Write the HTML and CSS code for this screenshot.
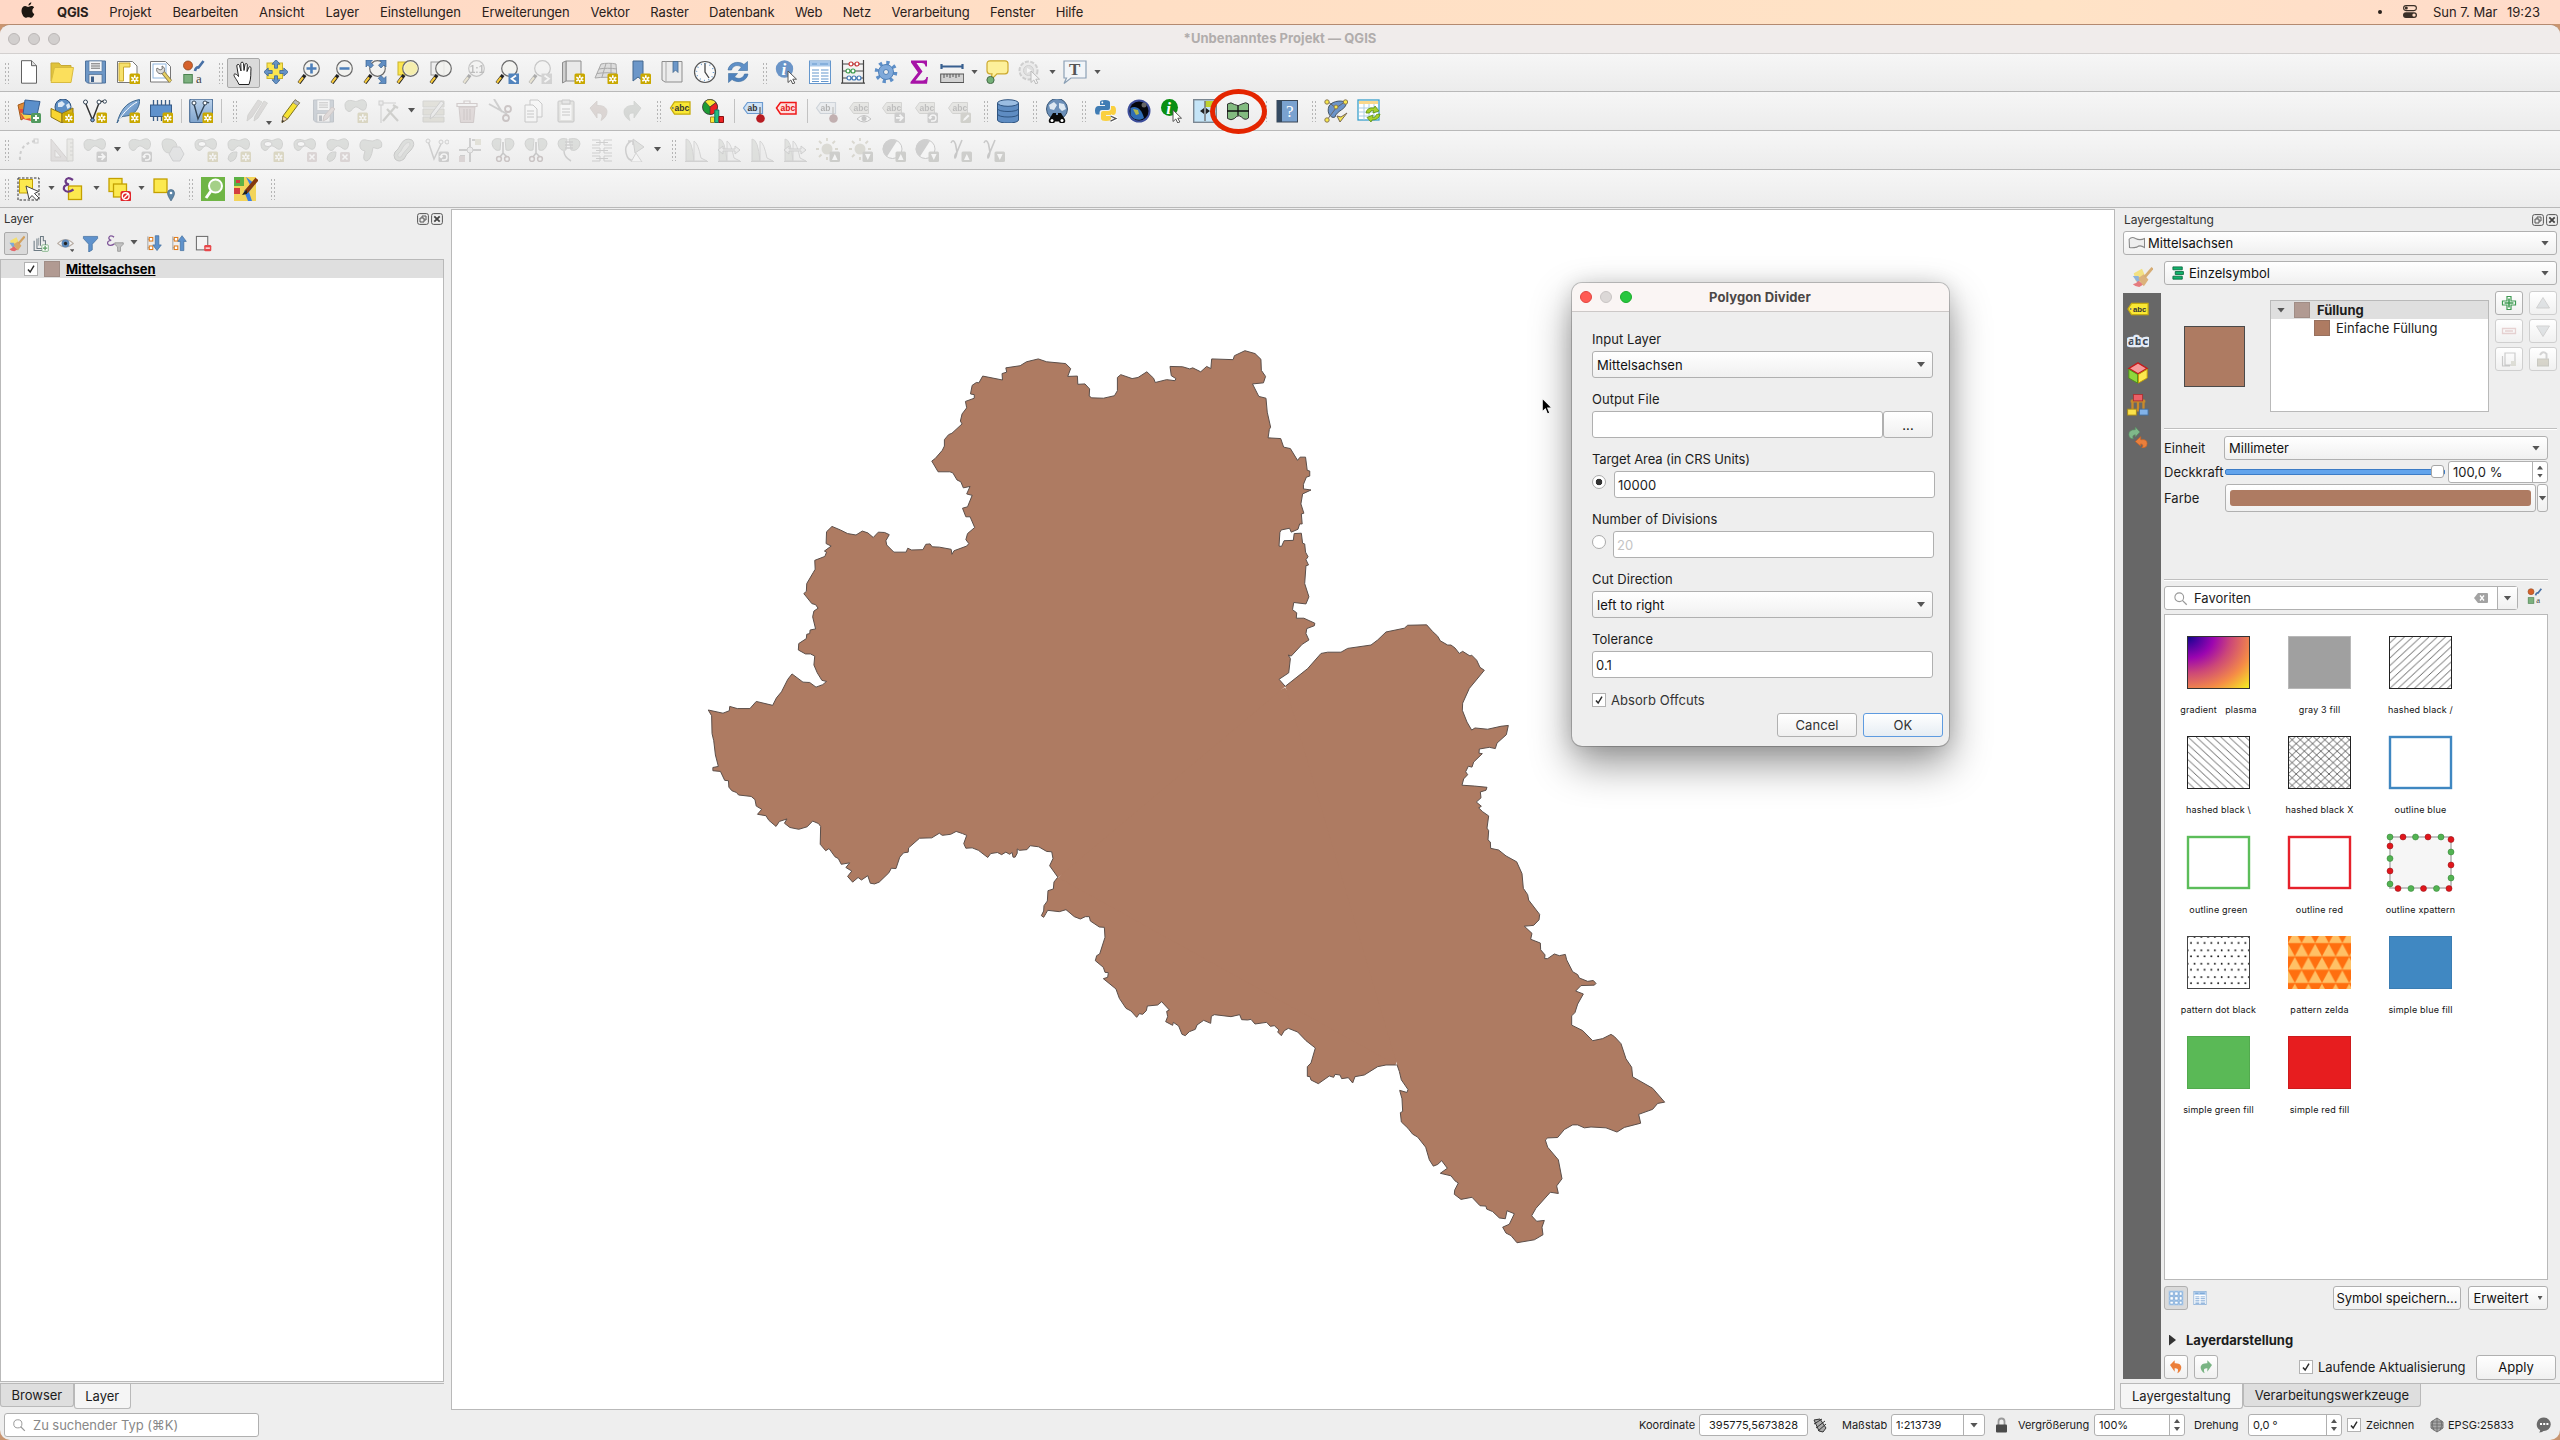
FILE: index.html
```html
<!DOCTYPE html>
<html lang="de">
<head>
<meta charset="utf-8">
<title>Unbenanntes Projekt — QGIS</title>
<link rel="stylesheet" href="styles.css">
</head>
<body>
<svg class="sprite" width="0" height="0" aria-hidden="true">
<defs>
<linearGradient id="gBlue" x1="0" y1="0" x2="1" y2="1"><stop offset="0" stop-color="#a9c8ea"/><stop offset="1" stop-color="#4a7db5"/></linearGradient>
<linearGradient id="gBox" x1="0" y1="0" x2="0" y2="1"><stop offset="0" stop-color="#bcd3ec"/><stop offset="1" stop-color="#7ea3cc"/></linearGradient>
<radialGradient id="gPlasma" cx="0" cy="0" r="1.4"><stop offset="0" stop-color="#0d0887"/><stop offset=".12" stop-color="#4a02a0"/><stop offset=".3" stop-color="#9c05b0"/><stop offset=".5" stop-color="#cc4778"/><stop offset=".75" stop-color="#f58c46"/><stop offset="1" stop-color="#f5f021"/></radialGradient>
<pattern id="pSlash" width="8.2" height="7.6" patternUnits="userSpaceOnUse"><path d="M-2 9.45L10.2 -1.85M-2 1.85L2 -1.85M6.2 9.45L10.2 5.75" stroke="#555" stroke-width=".9"/></pattern>
<pattern id="pBack" width="8.2" height="7.6" patternUnits="userSpaceOnUse"><path d="M-2 -1.85L10.2 9.45M-2 5.75L2 9.45M6.2 -1.85L10.2 1.85" stroke="#555" stroke-width=".9"/></pattern>
<pattern id="pDot" width="6.8" height="13.4" patternUnits="userSpaceOnUse"><circle cx="4" cy="7" r=".9"/><circle cx=".7" cy=".9" r=".9"/><circle cx="7.5" cy=".9" r=".9"/></pattern>
<pattern id="pZelda" width="13.6" height="26.6" patternUnits="userSpaceOnUse" y="-6"><path d="M0 13L6.8 .5L13.6 13ZM-6.8 26.3L0 13.8L6.8 26.3ZM6.8 26.3L13.6 13.8L20.4 26.3Z" fill="#ffc166"/></pattern>
</defs>
<symbol id="badge" viewBox="0 0 24 24"><rect x="13.5" y="13.5" width="10.5" height="11" rx="1.5" fill="#c9a800"/><path d="M18.8 15.2v7.6M15.3 17.2l7 3.8M22.3 17.2l-7 3.8" stroke="#fff" stroke-width="1.6"/><circle cx="18.8" cy="19" r="1.1" fill="#c9a800"/></symbol>
<symbol id="bx" viewBox="0 0 24 24"><rect x="14" y="14" width="10" height="10" rx="1.5" fill="#c99"/><path d="M16.5 16.5l5 5M21.5 16.5l-5 5" stroke="#fff" stroke-width="1.6"/></symbol>
<symbol id="barr" viewBox="0 0 24 24"><rect x="13.5" y="13.5" width="10.5" height="10.5" rx="1.5" fill="#888"/><path d="M15 18.8h6M18.5 15.7l3.2 3.1-3.2 3.1" fill="none" stroke="#fff" stroke-width="1.7"/></symbol>
<symbol id="brot" viewBox="0 0 24 24"><rect x="13.5" y="13.5" width="10.5" height="10.5" rx="1.5" fill="#888"/><path d="M17 22h2a3 3 0 1 0-3-3M14.8 18l1.3 1.6 1.6-1.4" fill="none" stroke="#fff" stroke-width="1.4"/></symbol>
<symbol id="bup" viewBox="0 0 24 24"><rect x="13.5" y="13.5" width="10.5" height="10.5" rx="1.5" fill="#898c78"/><path d="M16 22l2.8-6 2.8 6z" fill="#fff"/></symbol>
<symbol id="bdn" viewBox="0 0 24 24"><rect x="13.5" y="13.5" width="10.5" height="10.5" rx="1.5" fill="#898c78"/><path d="M16 16l2.8 6 2.8-6z" fill="#fff"/></symbol>
<symbol id="bpen" viewBox="0 0 24 24"><rect x="13.5" y="13.5" width="10.5" height="10.5" rx="1.5" fill="#999670"/><path d="M16 22l1-2.600 4-4 1.500 1.500-4 4z" fill="#fff"/></symbol>
<symbol id="lens" viewBox="0 0 24 24"><path d="M2 23L8 15" stroke="#222" stroke-width="3.6"/><path d="M2 22.600L6 17.300" stroke="#f8cb3c" stroke-width="2.200"/><circle cx="14.500" cy="8.500" r="7.800" fill="#f2f2ef" fill-opacity=".85" stroke="#6c6c6c" stroke-width="1.200"/></symbol>
<symbol id="cursor" viewBox="0 0 24 24"><path d="M13 11v11.500l2.800-2.500 2 4 2-1-2-3.800h3.700z" fill="#fff" stroke="#555" stroke-width="1"/></symbol>
<symbol id="blob" viewBox="0 0 24 24"><path d="M1 6C1 1.500 6 .5 10 2.200C14 3.500 16-.5 20 1.200C23.500 3 23 9 20.500 11C17 12.500 15 7.500 11.500 8C8 8.500 8 13 5 12.500C2 12 1 9 1 6Z" fill="#a9b8a3" stroke="#8a9088" stroke-width="1"/></symbol>

<symbol id="new" viewBox="0 0 24 24"><path d="M4.500 .7h10l5 5v17.500h-15z" fill="#fff" stroke="#606060"/><path d="M14.500 .7v5h5" fill="#ddd" stroke="#606060"/></symbol>
<symbol id="open" viewBox="0 0 24 24"><path d="M1 21V3h8l2 2.500h10V9" fill="#e0c33b" stroke="#c7a936"/><path d="M1 22.500L4.500 7.500H23.500L21 22.500z" fill="#fbdf5c" stroke="#d8bb40"/></symbol>
<symbol id="save" viewBox="0 0 24 24"><path d="M2.500 1h20v22h-18l-2-2z" fill="#6d97c6" stroke="#4f739d"/><rect x="6" y="1" width="13" height="10.500" fill="#f4f6f8" stroke="#5a7ba2" stroke-width=".7"/><path d="M8 3.800h9M8 6h9M8 8.200h9" stroke="#6c6c6c"/><rect x="6" y="14.500" width="13" height="8.500" fill="#eee" stroke="#506e91" stroke-width=".7"/><rect x="8" y="16.500" width="3" height="5.500" fill="#3e5f88"/></symbol>
<symbol id="layout" viewBox="0 0 24 24"><path d="M1.500 1.500h15l4.500 4.500v16.500h-19.500z" fill="#fff" stroke="#777"/><path d="M3 3h11v4H7.500v14H3z" fill="#f7e16b" stroke="#c9a82c"/><use href="#badge"/></symbol>
<symbol id="layouts" viewBox="0 0 24 24"><path d="M1.500 1.500h15l5 5v15.500h-20z" fill="#fff" stroke="#777"/><rect x="4" y="4" width="13" height="14" fill="none" stroke="#8fb6de"/><path d="M12 10l9.500 11.500" stroke="#8a7a42" stroke-width="4"/><path d="M13 11l8.500 10.500" stroke="#e6cf62" stroke-width="2.400"/><path d="M8 8a4 4 0 1 0 5-2l.3 3-2.300 1z" fill="#ddd" stroke="#777"/></symbol>
<symbol id="style" viewBox="0 0 24 24"><circle cx="6" cy="5.500" r="4.500" fill="#d5612b" stroke="#8d4720" stroke-width=".8"/><path d="M13 11c.5-3 2-4 3.500-3.500L21.500 1" fill="none" stroke="#4871a6" stroke-width="2.600"/><rect x="1.800" y="14.500" width="8.500" height="8.500" fill="#7cb07e" stroke="#4b8350"/><text x="14" y="23" font-family="Liberation Serif" font-size="13" fill="#444">a</text></symbol>
<symbol id="hand" viewBox="0 0 24 24"><path d="M8 23.500C6 18.500 2.500 15.500 3 13.500C4 12 6.500 14 7.500 15.500L5.800 5C5.600 3.200 8 2.800 8.500 4.500L10 10L9.800 2.500C9.800 .7 12.300 .7 12.500 2.500L13 9.500L14 3.500C14.300 2 16.500 2.300 16.300 4L16 10.500L17.700 6.500C18.300 5 20.200 5.700 20 7.300C19.500 12 20.500 17 18 23.500Z" fill="#fff" stroke="#222"/></symbol>
<symbol id="pan" viewBox="0 0 24 24"><rect x="3" y="3" width="15.500" height="15.500" fill="#fbe54f" stroke="#c9b32c"/><path d="M12 -.3l4 4.500h-2.500v4h-3v-4H8zM12 24.300l4-4.500h-2.500v-4h-3v4H8zM-.3 12l4.500-4v2.500h4v3h-4V16zM24.300 12l-4.500-4v2.500h-4v3h4V16z" fill="#6592c6" stroke="#3c6593" stroke-width=".8"/></symbol>
<symbol id="zin" viewBox="0 0 24 24"><use href="#lens"/><path d="M14.500 3.500v10M9.500 8.500h10" stroke="#4d7fba" stroke-width="2.600"/></symbol>
<symbol id="zout" viewBox="0 0 24 24"><use href="#lens"/><path d="M9.500 8.500h10" stroke="#4d7fba" stroke-width="2.600"/></symbol>
<symbol id="zfull" viewBox="0 0 24 24"><use href="#lens"/><path d="M3 0h6.500L7.500 2.200l3 3-2.800 2.800-3-3L3 7zM23 0v7l-2-2-3 3-2.500-2.800 3-3L16.500 0zM23 23.500h-7l2.200-2.200-3-3 2.800-2.800 3 3 2-2z" fill="#5f8dc2" stroke="#3c6593" stroke-width=".7"/></symbol>
<symbol id="zsel" viewBox="0 0 24 24"><rect x="2" y="2" width="13" height="13" fill="#fbe54f" stroke="#c9b32c"/><use href="#lens"/><circle cx="15" cy="8.500" r="6.500" fill="#f5eeae"/></symbol>
<symbol id="zlay" viewBox="0 0 24 24"><rect x="2" y="2" width="13" height="13" fill="#eee" stroke="#9a9a9a"/><use href="#lens"/></symbol>
<symbol id="z11" viewBox="0 0 24 24"><use href="#lens"/><text x="7.800" y="12.500" font-size="10" font-weight="700" font-family="Liberation Sans" fill="#555">1:1</text></symbol>
<symbol id="zlast" viewBox="0 0 24 24"><use href="#lens"/><rect x="13.500" y="13.500" width="10.500" height="10.500" fill="#5284bd"/><path d="M21 15.500l-4.500 3.300 4.500 3.300" fill="none" stroke="#fff" stroke-width="1.800"/></symbol>
<symbol id="znext" viewBox="0 0 24 24"><use href="#lens"/><rect x="13.500" y="13.500" width="10.500" height="10.500" fill="#999"/><path d="M16.500 15.500l4.500 3.300-4.500 3.300" fill="none" stroke="#fff" stroke-width="1.800"/></symbol>
<symbol id="nmap" viewBox="0 0 24 24"><path d="M5 1h15v20H5z" fill="#e9e9e9" stroke="#8d8d8d"/><path d="M1.500 2.500L5 1v20l-3.500 2z" fill="#cfcfcf" stroke="#8d8d8d"/><use href="#badge"/></symbol>
<symbol id="n3d" viewBox="0 0 24 24"><path d="M7 4c4-1 11-1 15 0l1 14c-7-1-15-1-22 0z" fill="#ddd" stroke="#a9a9a9"/><path d="M5 9c5-1 12-1 18 0M3 13.500c6-1 14-1 20 0M12 3.500L8 17M17 3.500l0 14" fill="none" stroke="#a9a9a9"/><use href="#badge"/></symbol>
<symbol id="nbook" viewBox="0 0 24 24"><path d="M6 1h10v20l-5-4-5 4z" fill="#6c97c9" stroke="#44698f"/><use href="#badge"/></symbol>
<symbol id="books" viewBox="0 0 24 24"><path d="M2 1.500h20v20.500H5l-3-2z" fill="#ececec" stroke="#8d8d8d"/><path d="M6 1.500v20" stroke="#aaa"/><path d="M13 1.500h5v11l-2.500-2.500-2.500 2.500z" fill="#6c97c9" stroke="#44698f" stroke-width=".8"/></symbol>
<symbol id="clock" viewBox="0 0 24 24"><circle cx="12" cy="12" r="10.500" fill="#fbfbfb" stroke="#555" stroke-width="1.200"/><path d="M12 3v9l4 6" fill="none" stroke="#444" stroke-width="1.300"/><circle cx="12" cy="12" r="8.500" fill="none" stroke="#6fa0d0" stroke-width="1.500" stroke-dasharray="1 3.450"/></symbol>
<symbol id="refresh" viewBox="0 0 24 24"><path d="M2 10C3 3 12 0 18 4.500L21.500 1.500V10.500H12.500L15.500 7C11 4 6.500 6 5.500 10Z" fill="#5f90c8" stroke="#42709f" stroke-width=".6"/><path d="M22 14C21 21 12 24 6 19.500L2.500 22.500V13.500H11.500L8.500 17C13 20 17.500 18 18.500 14Z" fill="#4f82bd" stroke="#42709f" stroke-width=".6"/></symbol>
<symbol id="ident" viewBox="0 0 24 24"><circle cx="9.500" cy="9" r="8.700" fill="#6b95c8"/><text x="6.500" y="15" font-family="Liberation Serif" font-style="italic" font-weight="700" font-size="17" fill="#fff">i</text><use href="#cursor"/></symbol>
<symbol id="table" viewBox="0 0 24 24"><rect x="1.500" y="1" width="21" height="22.500" fill="#fff" stroke="#6597cd"/><rect x="2" y="1.500" width="20" height="5" fill="#a8c8ea"/><path d="M4 10h7M4 13h7M4 16h7M4 19h7M4 21.500h7M13 10h7.500M13 13h7.500M13 16h7.500M13 19h7.500M13 21.500h7.500M12 4h8M4 4h5" stroke="#6597cd" stroke-width="1.200"/></symbol>
<symbol id="abacus" viewBox="0 0 24 24"><path d="M1.500 0v23M22.500 0v23M0 23.200h24M1.500 4h21M1.500 11h21M1.500 18h21" stroke="#444" stroke-width="1.200"/><g fill="#fff" stroke-width="1.200"><g stroke="#c33"><circle cx="10" cy="4" r="2"/><circle cx="16" cy="4" r="2"/></g><g stroke="#3a9a4a"><circle cx="7" cy="11" r="2"/><circle cx="12" cy="11" r="2"/></g><g stroke="#3f76b5"><circle cx="8" cy="18" r="2"/><circle cx="13" cy="18" r="2"/><circle cx="18" cy="18" r="2"/></g></g></symbol>
<symbol id="gear" viewBox="0 0 24 24"><circle cx="12" cy="12" r="9.300" fill="none" stroke="#5d8fc8" stroke-width="4" stroke-dasharray="3.200 4.100"/><circle cx="12" cy="12" r="7.500" fill="#7fa9da" stroke="#4f80b8"/><circle cx="12" cy="12" r="2.500" fill="#eee" stroke="#4f80b8"/></symbol>
<symbol id="sigma" viewBox="0 0 24 24"><path d="M4 0.500H20V6.500H18.500C18 4 17 3 14.500 3H9.500L15.500 11.500L8.500 20.500H15.500C18 20.500 19 19 19.500 17H21L20 23.800H3.500V22L11 12.500L4 2.500Z" fill="#a712a7"/></symbol>
<symbol id="ruler" viewBox="0 0 24 24"><path d="M1.500 6.500h21M1.500 4v5M22.500 4v5" stroke="#385f8f" stroke-width="2.200"/><rect x=".7" y="14" width="23" height="8.500" fill="#d2d2d2" stroke="#555"/><path d="M4 14v4M7 14v3M10 14v4M13 14v3M16 14v4M19 14v3" stroke="#555"/></symbol>
<symbol id="tip" viewBox="0 0 24 24"><path d="M5 .8h15q3 0 3 3v7q0 3-3 3h-8L6 20l1-6.200H5q-3 0-3-3v-7q0-3 3-3z" fill="#fdf09a" stroke="#cda92d" stroke-width="1.200"/><circle cx="5.500" cy="20" r="3.600" fill="#74b077" stroke="#466b48"/></symbol>
<symbol id="play" viewBox="0 0 24 24"><circle cx="10.500" cy="10.500" r="9" fill="#ddd" stroke="#888" stroke-width="2" stroke-dasharray="4 1.500"/><circle cx="10.500" cy="10.500" r="5" fill="#bbb" stroke="#888"/><path d="M9 8l4.500 2.500L9 13z" fill="#fff"/><use href="#cursor"/></symbol>
<symbol id="tbox" viewBox="0 0 24 24"><path d="M1 1h22v17H8l-7 5.500 2.500-5.500H1z" fill="#f2f5f8" stroke="#8ba0b5" stroke-width="1.200"/><text x="6" y="15" font-family="Liberation Serif" font-size="17" font-weight="700" fill="#555">T</text></symbol>

<symbol id="dsm" viewBox="0 0 24 24"><path d="M1 6l8-3v15l-5 3z" fill="#e08a33" stroke="#a3591b"/><path d="M2 10l4 10 8 2-2-12z" fill="#e34f3a"/><path d="M4 14l4 6 6-1v-6z" fill="#f5d34b"/><path d="M8 1L23 2.500 20 16 6 15z" fill="#5b8fcb" stroke="#375f92"/><rect x="14" y="14" width="10" height="10" rx="1.500" fill="#529a5f"/><path d="M19 16v6M16 19h6" stroke="#fff" stroke-width="1.800"/></symbol>
<symbol id="gpkg" viewBox="0 0 24 24"><circle cx="13" cy="8" r="8" fill="#5d8fc5" stroke="#2f5480"/><path d="M8 4l4-2 3 3-3 3-4 0zM16 6l3-2 1.500 4-3 2z" fill="#dce9f5"/><path d="M1 9.500l11 5v9.500L1 18z" fill="#f9d530" stroke="#8c7415"/><path d="M12 14.500L23 9v9l-11 6z" fill="#d9b31b" stroke="#8c7415"/><use href="#badge"/></symbol>
<symbol id="shp" viewBox="0 0 24 24"><path d="M2.500 4l7 17L16 4C17 2 20 2 22 3" fill="none" stroke="#333" stroke-width="1.500"/><circle cx="2.500" cy="3" r="2" fill="#fff" stroke="#345"/><circle cx="16" cy="3" r="2" fill="#fff" stroke="#345"/><circle cx="21.800" cy="2.500" r="1.700" fill="#fff" stroke="#345"/><circle cx="9.500" cy="21" r="1.800" fill="#7aa5d5" stroke="#345"/><use href="#badge"/></symbol>
<symbol id="feather" viewBox="0 0 24 24"><path d="M1 24C4 13 9 3 23.500 .5C24 6 21 14 13 16.500C9 17.500 6 17 4.500 18.500Z" fill="url(#gBlue)" stroke="#40698f"/><path d="M3 21C8 13 14 7 21 3" fill="none" stroke="#fff"/><use href="#badge"/></symbol>
<symbol id="chip" viewBox="0 0 24 24"><path d="M4.500 1v21M8.500 1v21M12.500 1v21M16.500 1v21M20.500 1v21" stroke="#3c5f88" stroke-width="1.300"/><rect x="1.500" y="6" width="21" height="11.500" fill="#5f92cc" stroke="#365b88"/><use href="#badge"/></symbol>
<symbol id="virt" viewBox="0 0 24 24"><rect x=".7" y=".2" width="23" height="23.500" rx="1.500" fill="url(#gBox)" stroke="#4c6f98" stroke-width="1.200"/><path d="M5 5l4 15L16 5C17 3 19 3 20 4" fill="none" stroke="#345" stroke-width="1.400"/><circle cx="5" cy="4" r="2" fill="#fff" stroke="#345"/><circle cx="16" cy="4" r="2" fill="#fff" stroke="#345"/><use href="#badge"/></symbol>
<symbol id="pens" viewBox="0 0 24 24"><path d="M2 22l1-6L13 1l4 2L7 18zM9 22l1-5L19 2l3.500 2L13 19z" fill="#b7a9a5" stroke="#998"/></symbol>
<symbol id="pencil" viewBox="0 0 24 24"><path d="M4 23.500L5 17 17 .8l4.500 3L9.500 20z" fill="#f6e233" stroke="#7a7020"/><path d="M17 .8l4.500 3-2 2.800-4.500-3z" fill="#b9b9b9" stroke="#777" stroke-width=".6"/><path d="M4 23.500L5 17l4.500 3z" fill="#f3d7b0" stroke="#654" stroke-width=".7"/><path d="M4 23.500l.5-2.500 1.700 1z" fill="#222"/></symbol>
<symbol id="savee" viewBox="0 0 24 24"><use href="#save"/><path d="M12 22l1-5 8-9 3 2-8 10z" fill="#d9a9a0" stroke="#a77"/></symbol>
<symbol id="addf" viewBox="0 0 24 24"><use href="#blob"/><use href="#badge"/></symbol>
<symbol id="vtx" viewBox="0 0 24 24"><path d="M4 4L4 24M4 4L19 4" stroke="#888"/><rect x="2" y="2" width="4" height="4" fill="#ddd" stroke="#888"/><path d="M6 22L18 8M10 10l11 12M16 6l5 3" stroke="#8c8f7a" stroke-width="2.200"/></symbol>
<symbol id="multi" viewBox="0 0 24 24"><path d="M1 2h21v6H1zM1 10h21v6H1zM1 18h21v5H1z" fill="#c5bf8c" stroke="#998"/><path d="M8 20l1-5 10-13 3 2-10 13z" fill="#ddd" stroke="#888"/></symbol>
<symbol id="trash" viewBox="0 0 24 24"><path d="M4 8h16l-1.500 15.500h-13z" fill="#dba4a4" stroke="#a77"/><path d="M2 4.500h20v3H2zM9 4V2h6v2M9 10v11M12 10v11M15 10v11" fill="none" stroke="#a77" stroke-width="1.200"/></symbol>
<symbol id="cut" viewBox="0 0 24 24"><path d="M1 5l18 10M6 0l8 13" stroke="#888" stroke-width="2"/><circle cx="20" cy="10" r="3" fill="none" stroke="#966" stroke-width="1.800"/><circle cx="18" cy="19" r="3" fill="none" stroke="#966" stroke-width="1.800"/></symbol>
<symbol id="copy" viewBox="0 0 24 24"><path d="M9 1h8l4 4v13H9z" fill="#fff" stroke="#777"/><path d="M4 6h8l4 4v13H4z" fill="#fff" stroke="#777"/><path d="M6 12h7M6 15h7M6 18h7" stroke="#777"/></symbol>
<symbol id="paste" viewBox="0 0 24 24"><rect x="4" y="2" width="16" height="21" rx="1" fill="#c9c7b8" stroke="#777"/><path d="M6.500 6h11v15h-11z" fill="#fff"/><path d="M8 1h8v4H8z" fill="#ccc" stroke="#777"/><path d="M8 10h8M8 13h8M8 16h8" stroke="#777"/></symbol>
<symbol id="undo" viewBox="0 0 24 24"><path d="M3 9l7-7v4.500c8-.5 12 4 9 10-1 2-3 4-5 5 1-3 3-8-4-7.500V19z" fill="#c98" stroke="#a87" stroke-width=".8"/></symbol>
<symbol id="redo" viewBox="0 0 24 24"><path d="M21 9l-7-7v4.500c-8-.5-12 4-9 10 1 2 3 4 5 5-1-3-3-8 4-7.500V19z" fill="#9a9" stroke="#898" stroke-width=".8"/></symbol>
<symbol id="lab" viewBox="0 0 24 24"><path d="M1.500 9L5.500 2.800h15.500v12.400H5.500z" fill="#fae834" stroke="#c6ac10" stroke-width="1.300"/><circle cx="3.800" cy="9" r="1" fill="#777"/><text x="5.500" y="12" font-family="Liberation Sans" font-weight="700" font-size="8.500" fill="#333">abc</text></symbol>
<symbol id="labtab" viewBox="0 0 24 24"><path d="M1 12L5 5.800h18v12.400H5z" fill="#fae834" stroke="#c6ac10" stroke-width="1.300"/><circle cx="4" cy="12" r="1" fill="#777"/><text x="6.500" y="15" font-family="Liberation Sans" font-weight="700" font-size="8.500" fill="#333">abc</text></symbol>
<symbol id="diag" viewBox="0 0 24 24"><circle cx="8" cy="8" r="7.500" fill="#1d9b35" stroke="#333" stroke-width=".8"/><path d="M8 8L3 2.500A7.500 7.500 0 0 1 14 3.500Z" fill="#fae834" stroke="#333" stroke-width=".6"/><path d="M8 8L14 3.500A7.500 7.500 0 0 1 8 15.500Z" fill="#e22" stroke="#333" stroke-width=".6"/><path d="M8.500 18h4v5.500h-4z" fill="#fae834" stroke="#a82"/><path d="M12.800 11h4v12.500h-4z" fill="#25c07f" stroke="#176"/><path d="M17 17.500h4.500v6H17z" fill="#e22" stroke="#811"/></symbol>
<symbol id="pin" viewBox="0 0 24 24"><path d="M1.500 9L5.500 3.500h15v11h-15z" fill="#cfe2f6" stroke="#6c9bd0" stroke-width="1.200"/><text x="5.500" y="12" font-family="Liberation Sans" font-weight="700" font-size="8.500" fill="#333">ab</text><path d="M18 8v10" stroke="#777" stroke-width="1.500"/><circle cx="18.500" cy="19.500" r="4.300" fill="#b71c22"/></symbol>
<symbol id="labr" viewBox="0 0 24 24"><path d="M1.500 9L5.500 3.500h15.500v11.500H5.500z" fill="#fdd" stroke="#f01818" stroke-width="1.500"/><text x="5.500" y="12" font-family="Liberation Sans" font-weight="700" font-size="8.500" fill="#e01010">abc</text></symbol>
<symbol id="labg" viewBox="0 0 24 24"><path d="M1.500 9L5.500 3.500h15v11h-15z" fill="#cfcdb8" stroke="#99978a"/><text x="5.500" y="12" font-family="Liberation Sans" font-weight="700" font-size="8.500" fill="#555">abc</text></symbol>
<symbol id="labeye" viewBox="0 0 24 24"><use href="#labg"/><path d="M9 20q7-7 14 0q-7 6-14 0z" fill="#fff" stroke="#666"/><circle cx="16" cy="19.500" r="2.500" fill="#777"/></symbol>
<symbol id="labmv" viewBox="0 0 24 24"><use href="#labg"/><use href="#barr"/></symbol>
<symbol id="labrt" viewBox="0 0 24 24"><use href="#labg"/><use href="#brot"/></symbol>
<symbol id="labed" viewBox="0 0 24 24"><use href="#labg"/><use href="#bpen"/></symbol>
<symbol id="db" viewBox="0 0 24 24"><path d="M1.500 4v17c0 4 21 4 21 0V4" fill="#5e8cc2" stroke="#2f5480"/><ellipse cx="12" cy="4" rx="10.500" ry="3.300" fill="#9bbde2" stroke="#2f5480"/><path d="M1.500 9.500c0 4 21 4 21 0M1.500 15c0 4 21 4 21 0" fill="none" stroke="#2f5480"/></symbol>
<symbol id="binoc" viewBox="0 0 24 24"><circle cx="12" cy="10" r="10.500" fill="#6b8fb8" stroke="#3a5878"/><path d="M4 6l5-3 3 3-3 5-4-1zM14 4l5 1 2 5-4 2-3-3z" fill="#dde8f2"/><path d="M8 14h3v2h2v-2h3l4 6.500a3 3 0 1 1-6 2h-4a3 3 0 1 1-6-2z" fill="#0a0a0a"/><circle cx="7" cy="21.500" r="1.500" fill="#fff"/><circle cx="17" cy="21.500" r="1.500" fill="#fff"/></symbol>
<symbol id="py" viewBox="0 0 24 24"><path d="M6 6V3Q6 1 11 1t5 2.500V9q0 2-2 2H8q-2.500 0-2.500 3v1.500H3Q1 15.500 1 11.500T4 7h7V6z" fill="#3f7cb4"/><path d="M17 7h2.500Q22 7 22 11.500T19 16h-7v1h5v2.500Q17 22 12 22t-5-2.500V14q0-2 2-2h5q3 0 3-3z" fill="#fad03f"/><circle cx="8.300" cy="3.500" r=".9" fill="#fff"/><path d="M16.500 16.500l6 3-6 3" fill="none" stroke="#fff" stroke-width="3"/><path d="M16.500 17l5.500 2.600-5.500 2.600" fill="none" stroke="#555" stroke-width="1.300"/></symbol>
<symbol id="earth" viewBox="0 0 24 24"><circle cx="12" cy="12" r="11.500" fill="#3c4d9a"/><circle cx="12" cy="12" r="9.500" fill="#05070d"/><path d="M3.500 9c5-3 11 0 13.500 10-4 3-10 2.500-13.500-3z" fill="#2f6db5"/><path d="M6 10l5 1 1 4-3 1z" fill="#b0b94a"/><circle cx="17" cy="6" r="2.500" fill="#666"/></symbol>
<symbol id="gi" viewBox="0 0 24 24"><circle cx="9.500" cy="8.500" r="8.500" fill="#0a8f12"/><text x="6.300" y="14.500" font-family="Liberation Serif" font-style="italic" font-weight="700" font-size="17" fill="#fff">i</text><use href="#cursor"/></symbol>
<symbol id="swipe" viewBox="0 0 24 24"><rect x=".7" y=".7" width="22.600" height="22.600" fill="#c4e4f7" stroke="#7b8792" stroke-width="1.400"/><path d="M12 2h10v6H12z" fill="#bed22e"/><path d="M12 2v20" stroke="#777" stroke-width="1.500"/><path d="M7 12l4-3v6zM17 12l-4-3v6z" fill="#222"/></symbol>
<symbol id="divider" viewBox="0 0 24 24"><path d="M1.500 5Q5 2.500 8.500 5.500Q12 8 16 5Q20 2.500 22.500 5V19Q19 22 15.500 18Q12 15 8.500 19.500Q5 22 1.500 19.500Z" fill="#83bb80" stroke="#333"/><path d="M1 12h22M12 6.500v10" stroke="#111" stroke-width="1.300"/></symbol>
<symbol id="help" viewBox="0 0 24 24"><rect x="2" y="1.500" width="20.500" height="21.500" fill="#7aa2d0" stroke="#3b4756"/><rect x="2" y="1.500" width="5" height="21.500" fill="#344a62"/><text x="11" y="18" font-family="Liberation Serif" font-size="17" fill="#fff">?</text></symbol>
<symbol id="topo" viewBox="0 0 24 24"><path d="M5 7C9 1 20 1 22 4C23 10 12 12 11 18C8 20 2 15 5 7Z" fill="#6c94c9" stroke="#456"/><path d="M3 2l9 7L22 2M12 9L3 21" stroke="#666" fill="none"/><g fill="#f8e84a" stroke="#875"><circle cx="3" cy="3" r="2.200"/><circle cx="21.500" cy="3" r="2.200"/><circle cx="12" cy="8" r="2"/><circle cx="3" cy="21" r="2.200"/></g><path d="M13 17l3 6 7-9-6 4z" fill="#f8e84a" stroke="#765"/></symbol>
<symbol id="tabref" viewBox="0 0 24 24"><rect x="1" y="1" width="21" height="20" fill="#fff" stroke="#3ba0cd" stroke-width="1.300"/><path d="M2 2h19v3H2z" fill="#f9d88c"/><path d="M2 9h19M2 13h19M2 17h19M7 5v16M12 5v16M17 5v16" stroke="#aecfe4"/><path d="M9 14q1-6 8-5l1-2 4 5-6 2 .5-2.500q-3-.5-4 2.500zM23 15q-1 6-8 6l-1 2-4-4.500 6-2.500-.5 2.500q3 .5 4-3z" fill="#a7d129" stroke="#5a8f10" stroke-width=".8"/></symbol>

<symbol id="curve" viewBox="0 0 24 24"><path d="M3 22Q2 6 18 3" fill="none" stroke="#888" stroke-width="2" stroke-dasharray="3 3"/><rect x="17" y="1" width="4" height="4" fill="none" stroke="#888"/></symbol>
<symbol id="tri" viewBox="0 0 24 24"><path d="M1 1v22h18zM5 12v7h6z" fill="#c8b8b4" fill-rule="evenodd" stroke="#a9908c"/><path d="M17 1h6v22h-6z" fill="#d8d6bc" stroke="#998"/><path d="M20 5h3M20 9h3M20 13h3M20 17h3" stroke="#998"/></symbol>
<symbol id="mv" viewBox="0 0 24 24"><use href="#blob"/><use href="#barr"/></symbol>
<symbol id="rt" viewBox="0 0 24 24"><use href="#blob"/><use href="#brot"/></symbol>
<symbol id="simp" viewBox="0 0 24 24"><path d="M1 6q0-6 7-5q7 1 8 7q-2 6-8 7q-6 0-7-9z" fill="#a9b8a3" stroke="#8a9088"/><path d="M12 9h7l4 7-4 7h-7l-4-7z" fill="#c2cad0" stroke="#8a9098"/></symbol>
<symbol id="ring" viewBox="0 0 24 24"><use href="#blob"/><ellipse cx="8" cy="6" rx="4" ry="2.500" fill="#fff" stroke="#888"/><use href="#badge"/></symbol>
<symbol id="part" viewBox="0 0 24 24"><use href="#blob"/><path d="M1 21q1-8 9-7q0 9-7 9.500z" fill="#a9b8a3" stroke="#8a9088"/><use href="#badge"/></symbol>
<symbol id="dring" viewBox="0 0 24 24"><use href="#blob"/><ellipse cx="8" cy="6" rx="4" ry="2.500" fill="#fff" stroke="#888"/><use href="#bx"/></symbol>
<symbol id="dpart" viewBox="0 0 24 24"><use href="#blob"/><path d="M1 21q1-8 9-7q0 9-7 9.500z" fill="#a9b8a3" stroke="#8a9088"/><use href="#bx"/></symbol>
<symbol id="reshape" viewBox="0 0 24 24"><path d="M1 6Q2 0 9 2.500Q14 4 18 1.500Q24 2 22.500 9Q19 12 14 9.500Q12 23 7 23Q3 22 6 13Q0 12 1 6Z" fill="#a9b8a3" stroke="#8a9088"/></symbol>
<symbol id="offset" viewBox="0 0 24 24"><path d="M3 14Q6 12 9 6Q13 -1 20 2Q24 6 19 12Q14 16 12 21Q7 25 3 21Q1 17 3 14Z" fill="#a9b8a3" stroke="#777"/><path d="M6 16Q9 14 11 9Q15 3 18 5Q19 7 15 11Q11 15 9 19Q5 20 6 16Z" fill="#c7cfc3" stroke="#999"/></symbol>
<symbol id="vrot" viewBox="0 0 24 24"><path d="M3 3l6 18L16 6" fill="none" stroke="#888" stroke-width="1.500"/><circle cx="3" cy="3" r="2" fill="#eee" stroke="#888"/><circle cx="16" cy="4" r="2" fill="#eee" stroke="#888"/><circle cx="22" cy="4" r="2" fill="#eee" stroke="#888"/><use href="#brot"/></symbol>
<symbol id="trim" viewBox="0 0 24 24"><path d="M12 0v24M1 12h22M14 2h4M2 18h5" stroke="#888" stroke-width="2"/><circle cx="12" cy="12" r="3" fill="#ddd" stroke="#888"/><rect x="17" y="1" width="6" height="6" fill="#c7bf77"/><rect x="1" y="18" width="6" height="6" fill="#c99"/></symbol>
<symbol id="split" viewBox="0 0 24 24"><path d="M10 1q-9-2-9 5q2 8 8 6zM14 1q9-2 9 5q-2 8-8 6z" fill="#a9b8a3" stroke="#8a9088"/><path d="M12 4v11M12 15l-3 4M12 15l4 4" stroke="#777" stroke-width="1.500"/><circle cx="8" cy="21" r="2.400" fill="none" stroke="#966" stroke-width="1.500"/><circle cx="16" cy="21" r="2.400" fill="none" stroke="#966" stroke-width="1.500"/></symbol>
<symbol id="merge" viewBox="0 0 24 24"><path d="M10 1q-9-2-9 5q2 8 8 6zM12 1q11-2 11 5q-2 8-9 6z" fill="#a9b8a3" stroke="#8a9088"/><path d="M8 4h8M8 7h8M8 10h8M7 13q0 6 7 10" stroke="#888" stroke-width="1.500" fill="none"/></symbol>
<symbol id="grid" viewBox="0 0 24 24"><path d="M2 2h8v5H2M22 2h-8v5h8M2 10h8v5H2M22 10h-8v5h8M2 18h8v5H2M22 18h-8v5h8M6 4.500h12M6 12.500h12M6 20.500h12" fill="none" stroke="#888"/></symbol>
<symbol id="rsym" viewBox="0 0 24 24"><path d="M8 3Q0 8 4 18M11 23Q5 22 4 18M5 3h5v4" fill="none" stroke="#888" stroke-width="1.500"/><path d="M10 1l11 8-9 6z" fill="#b9c0b5" stroke="#888"/><path d="M13 15l6 9H8z" fill="#fff" stroke="#999"/></symbol>
<symbol id="hist" viewBox="0 0 24 24"><path d="M1 23.500h23" stroke="#999"/><path d="M2 23V1q6 0 8 22z" fill="#b8c2b0" stroke="#999"/><path d="M10 23V3q4 2 7 17l6 3z" fill="#e6e6e6" stroke="#999"/></symbol>
<symbol id="histx" viewBox="0 0 24 24"><use href="#hist"/><path d="M1 12l5-4v3h12V8l5 4-5 4v-3H6v3z" fill="#ddd" stroke="#888"/></symbol>
<symbol id="sun" viewBox="0 0 24 24"><circle cx="11" cy="11" r="5.500" fill="#b4ad7b"/><path d="M11 0v3M11 19v3M0 11h3M19 11h3M3 3l2.500 2.500M19 3l-2.500 2.500M3 19l2.500-2.500" stroke="#b4a35b" stroke-width="1.800"/></symbol>
<symbol id="sunu" viewBox="0 0 24 24"><use href="#sun"/><use href="#bup"/></symbol>
<symbol id="sund" viewBox="0 0 24 24"><use href="#sun"/><use href="#bdn"/></symbol>
<symbol id="con" viewBox="0 0 24 24"><circle cx="10.500" cy="11" r="9.500" fill="#fff" stroke="#777"/><path d="M15 3A9 9 0 0 0 5 18.500z" fill="#888"/></symbol>
<symbol id="conu" viewBox="0 0 24 24"><use href="#con"/><use href="#bup"/></symbol>
<symbol id="cond" viewBox="0 0 24 24"><use href="#con"/><use href="#bdn"/></symbol>
<symbol id="gam" viewBox="0 0 24 24"><path d="M3 5Q5 0 7.500 6L9 14Q8 20 7 20Q6 18 9 14L14 2" fill="none" stroke="#777" stroke-width="1.600"/></symbol>
<symbol id="gamu" viewBox="0 0 24 24"><use href="#gam"/><use href="#bup"/></symbol>
<symbol id="gamd" viewBox="0 0 24 24"><use href="#gam"/><use href="#bdn"/></symbol>

<symbol id="sel" viewBox="0 0 24 24"><rect x="1" y="1" width="21" height="22" fill="none" stroke="#333" stroke-dasharray="2.500 1.500"/><rect x="2.500" y="2.500" width="13" height="13.500" fill="#fce94f" stroke="#c4a000"/><path d="M9 9l3 13 3-3.500 4.500 4.500 2.500-2-4.500-4.500 4-2z" fill="#fff" stroke="#444"/></symbol>
<symbol id="eps" viewBox="0 0 24 24"><rect x="6.500" y="9" width="13" height="13.500" fill="#fce94f" stroke="#c4a000" stroke-width="1.300"/><path d="M11 3Q5-1 3.500 4Q3.500 7 7 7.500Q1 8 2 12.500Q5 17 11.500 12.500" fill="none" stroke="#6b3a86" stroke-width="2.200"/></symbol>
<symbol id="desel" viewBox="0 0 24 24"><rect x="2" y="1.500" width="13" height="13" fill="#fce94f" stroke="#c4a000" stroke-width="1.300"/><rect x="6.500" y="7" width="13" height="13" fill="#fce94f" stroke="#c4a000" stroke-width="1.300"/><rect x="13.500" y="14" width="10.500" height="10.500" rx="2" fill="#e0262b"/><circle cx="18.700" cy="19.200" r="3.400" fill="none" stroke="#fff" stroke-width="1.400"/><path d="M16.500 21.500l4.500-4.500" stroke="#fff" stroke-width="1.400"/></symbol>
<symbol id="sloc" viewBox="0 0 24 24"><rect x="2" y="2" width="13" height="13.500" fill="#fce94f" stroke="#c4a000" stroke-width="1.300"/><path d="M19 24q-4-6-3.500-8.500q.5-3 3.500-3t3.500 3q.5 2.500-3.500 8.500z" fill="#5f87a8" stroke="#41627d" stroke-width=".6"/><circle cx="19" cy="16" r="1.300" fill="#fff"/></symbol>
<symbol id="osm" viewBox="0 0 24 24"><rect width="24" height="24" y="0" fill="#6fb545"/><circle cx="14.500" cy="9" r="6.500" fill="#a5d088" stroke="#fff" stroke-width="2"/><path d="M10 14l-5 7" stroke="#fff" stroke-width="3"/></symbol>
<symbol id="qosm" viewBox="0 0 24 24"><rect width="22" height="24" fill="#f3d45a"/><path d="M0 0h10v9H0z" fill="#5cb245"/><path d="M12 0l4 8-6 6 4 10h4l-3-9 6-8z" fill="#3c7fe0"/><path d="M0 11h6v6H0zM2 3h4v3H2z" fill="#d33f3f"/><path d="M23 2L12 15" stroke="#84380e" stroke-width="4"/><path d="M13 13q-3 1-5 5l5-1z" fill="#222"/></symbol>

<symbol id="brush" viewBox="0 0 24 24"><path d="M3 8l9-5 4 9-10 9q2-4-1-5z" fill="#f4df70"/><path d="M2 11l6 0 3 4-4 3z" fill="#7ea9d8"/><path d="M2 20q4-1 6-4l6 4-5 3q-4 0-7-3z" fill="#e4676b"/><path d="M8 13l6-4 5 6-5 7q-4-4-6-9z" fill="#d9a868"/><path d="M15 12L23.500 2" stroke="#d2a15f" stroke-width="3"/></symbol>
<symbol id="addg" viewBox="0 0 24 24"><path d="M3 8v14h11M7 5v14h12V8h-3V2h-4v13" fill="none" stroke="#6d7b84" stroke-width="1.500"/><path d="M9.500 15V4" stroke="#6d7b84"/><rect x="14" y="14" width="9" height="9" rx="1" fill="#fff" stroke="#5a9c62"/><path d="M18.500 15.500v6M15.500 18.500h6" stroke="#5a9c62" stroke-width="1.800"/></symbol>
<symbol id="eye" viewBox="0 0 24 24"><path d="M1 12Q12 1 23 12Q12 22 1 12Z" fill="#f4f4f4" stroke="#b9aea5" stroke-width="1.500"/><circle cx="12" cy="12" r="5.500" fill="#5b87b8"/><circle cx="12" cy="12" r="2.300" fill="#222"/><path d="M18 20h7l-3.500 4z" fill="#555"/></symbol>
<symbol id="filter" viewBox="0 0 24 24"><path d="M2 2h20v3l-7.500 8v8l-5 3V13L2 5z" fill="#5f92cc" stroke="#3f6b9c"/></symbol>
<symbol id="epsf" viewBox="0 0 24 24"><path d="M10 3Q4-1 2.500 4Q2.500 7 6 7.500Q0 8 1 12.500Q4 17 10.500 12.500" fill="none" stroke="#80589a" stroke-width="1.800"/><path d="M11 11h12v2l-4 4v6h-4v-6l-4-4z" fill="#c2c2c2" stroke="#888"/></symbol>
<symbol id="expd" viewBox="0 0 24 24"><path d="M4 2v19M4 6h6M4 18h6" stroke="#888"/><rect x="6" y="3.500" width="5" height="5" fill="#fff" stroke="#e07b1a" stroke-width="1.500"/><rect x="6" y="15.500" width="5" height="5" fill="#fff" stroke="#e07b1a" stroke-width="1.500"/><path d="M14.500 1h5v13h3.500L17 22l-6-8h3.500z" fill="#5f92cc" stroke="#3f6b9c"/></symbol>
<symbol id="coll" viewBox="0 0 24 24"><path d="M4 2v19M4 6h6M4 18h6" stroke="#888"/><rect x="6" y="3.500" width="5" height="5" fill="#fff" stroke="#e07b1a" stroke-width="1.500"/><rect x="6" y="15.500" width="5" height="5" fill="#fff" stroke="#e07b1a" stroke-width="1.500"/><path d="M14.500 22h5V9h3.500L17 1l-6 8h3.500z" fill="#5f92cc" stroke="#3f6b9c"/></symbol>
<symbol id="rem" viewBox="0 0 24 24"><rect x="2" y="2" width="16" height="19" fill="#f4f4f4" stroke="#6e6e6e" stroke-width="1.500"/><rect x="13" y="14" width="10" height="9" rx="2" fill="#e8484b"/><path d="M15 18.500h6" stroke="#fff" stroke-width="1.800"/></symbol>
<symbol id="abc3" viewBox="0 0 24 24"><text x="1" y="16.500" font-family="Noto Sans" font-weight="700" font-size="12.500" fill="#3c4654" stroke="#e4ebf6" stroke-width="5" stroke-linejoin="round" paint-order="stroke" textLength="22">abc</text></symbol>
<symbol id="cube" viewBox="0 0 24 24"><path d="M12 1l10 6-10 6L2 7z" fill="#f59a9a" stroke="#c41c1c" stroke-width="1.500"/><path d="M2 8l9.500 5.500V23L2 17.500z" fill="#8fd83c" stroke="#4d9417"/><path d="M22 8l-9.500 5.500V23l9.500-5.500z" fill="#fce94f" stroke="#c4a000"/></symbol>
<symbol id="style3" viewBox="0 0 24 24"><path d="M12 6v13M6 6v12M18 6v12M4 8h16" stroke="#c98a2a" stroke-width="2.500"/><rect x="7" y=".5" width="10" height="7" fill="#ec5f66" stroke="#a33"/><rect x=".7" y="16.500" width="9.500" height="6.500" fill="#fbe24a" stroke="#a88a17"/><rect x="13.500" y="16.500" width="9.500" height="6.500" fill="#82b2e8" stroke="#3f6b9c"/></symbol>
<symbol id="hist2" viewBox="0 0 24 24"><path d="M14 6.500L9 1v3Q2 4 2 9t5 5q-2-4 2-4.500V12z" fill="#7fb88a" stroke="#588f63" stroke-width=".7"/><path d="M9 17l6-5.500V15q7-1 7 4t-6 5q3-4-1-4.500V22z" fill="#ea7f3c" stroke="#c25f22" stroke-width=".7"/></symbol>
<symbol id="polyg" viewBox="0 0 24 24"><path d="M1.500 7Q5 3 10 6Q16 9 22 6V18Q16 14 12 17.500Q5 19 2 18Z" fill="#eee" stroke="#888" stroke-width="1.400"/></symbol>
<symbol id="single" viewBox="0 0 24 24"><path d="M5 1.500h16v5H5zM9 9.500h14v5H9zM5 17.500h16v5H5z" fill="#11b36c" stroke="#0b6b40" stroke-width="1.500"/></symbol>
<symbol id="mag" viewBox="0 0 24 24"><circle cx="10" cy="10" r="7" fill="none" stroke="#999" stroke-width="1.700"/><path d="M15 15l7 7" stroke="#999" stroke-width="2"/></symbol>
<symbol id="gridv" viewBox="0 0 24 24"><rect x="1" y="1" width="22" height="22" fill="#a8c8ea"/><path d="M3 3h5v5H3zM10 3h5v5h-5zM17 3h4v5h-4zM3 10h5v5H3zM10 10h5v5h-5zM17 10h4v5h-4zM3 17h5v4H3zM10 17h5v4h-5zM17 17h4v4h-4z" fill="#fff" stroke="#6597cd" stroke-width=".8"/></symbol>
<symbol id="undoc" viewBox="0 0 24 24"><path d="M3 9l7-7v4.500c8-.5 12 4 9 10-1 2-3 4-5 5 1-3 3-8-4-7.500V19z" fill="#ec7f3a"/></symbol>
<symbol id="redoc" viewBox="0 0 24 24"><path d="M21 9l-7-7v4.500c-8-.5-12 4-9 10 1 2 3 4 5 5-1-3-3-8 4-7.500V19z" fill="#79b483"/></symbol>
<symbol id="chk" viewBox="0 0 14 14"><path d="M3.500 7.500L6 10.500L10.500 3" fill="none" stroke="#2b2b2b" stroke-width="1.700"/></symbol>
<symbol id="float" viewBox="0 0 12 12"><rect x=".6" y=".6" width="10.800" height="10.800" rx="2" fill="none" stroke="#555"/><path d="M5 5V3h4v4H7M3 5h4v4H3z" fill="none" stroke="#555"/></symbol>
<symbol id="close" viewBox="0 0 12 12"><rect x=".6" y=".6" width="10.800" height="10.800" rx="2" fill="none" stroke="#555"/><path d="M3.300 3.300l5.400 5.400M8.700 3.300L3.300 8.700" stroke="#444" stroke-width="1.800"/></symbol>
</svg>

<header class="menubar">
  <svg class="apple" viewBox="0 0 14 17"><path d="M10.300.3c.1 1.600-1.200 3.200-2.900 3.300C7.300 2 8.700.5 10.300.3zM13.300 12.100c-.8 1.900-1.800 3.700-3.200 3.700-1 0-1.400-.6-2.700-.6s-1.800.6-2.700.6C2.800 15.800.5 12 .5 8.800c0-3 1.800-4.700 3.700-4.700 1.200 0 2.200.8 2.900.8.800 0 1.900-.9 3.300-.8 1.100 0 2.100.5 2.700 1.400-2.600 1.600-2.100 5.400.2 6.600z" fill="#1d1712"/></svg>
  <b class="m0">QGIS</b><span>Projekt</span><span>Bearbeiten</span><span>Ansicht</span><span>Layer</span><span>Einstellungen</span><span>Erweiterungen</span><span>Vektor</span><span>Raster</span><span>Datenbank</span><span>Web</span><span>Netz</span><span>Verarbeitung</span><span>Fenster</span><span>Hilfe</span>
  <i class="dot"></i>
  <svg class="ctrl" viewBox="0 0 14 13"><rect x=".6" y=".6" width="12.800" height="5" rx="2.500" fill="none" stroke="#3a2f27" stroke-width="1.100"/><circle cx="3.300" cy="3.100" r="1.500" fill="#3a2f27"/><rect x="0" y="7.200" width="14" height="5.800" rx="2.900" fill="#3a2f27"/><circle cx="11" cy="10.100" r="1.700" fill="#ffdcc6"/></svg>
  <time class="date">Sun 7. Mar</time><time class="clock">19:23</time>
</header>

<main class="window">
  <div class="titlebar"><div class="lights"><i></i><i></i><i></i></div><h1>*Unbenanntes Projekt — QGIS</h1></div>

  <div class="toolbar t1"><i class="handle first"></i><svg class="ic"><use href="#new"/></svg><svg class="ic"><use href="#open"/></svg><svg class="ic"><use href="#save"/></svg><svg class="ic"><use href="#layout"/></svg><svg class="ic"><use href="#layouts"/></svg><svg class="ic"><use href="#style"/></svg><i class="handle"></i><span class="pressed"><svg class="ic"><use href="#hand"/></svg></span><svg class="ic"><use href="#pan"/></svg><svg class="ic"><use href="#zin"/></svg><svg class="ic"><use href="#zout"/></svg><svg class="ic"><use href="#zfull"/></svg><svg class="ic"><use href="#zsel"/></svg><svg class="ic"><use href="#zlay"/></svg><svg class="ic off"><use href="#z11"/></svg><svg class="ic"><use href="#zlast"/></svg><svg class="ic off"><use href="#znext"/></svg><svg class="ic"><use href="#nmap"/></svg><svg class="ic"><use href="#n3d"/></svg><svg class="ic"><use href="#nbook"/></svg><svg class="ic"><use href="#books"/></svg><svg class="ic"><use href="#clock"/></svg><svg class="ic"><use href="#refresh"/></svg><i class="handle"></i><svg class="ic"><use href="#ident"/></svg><svg class="ic"><use href="#table"/></svg><svg class="ic"><use href="#abacus"/></svg><svg class="ic"><use href="#gear"/></svg><svg class="ic"><use href="#sigma"/></svg><svg class="ic"><use href="#ruler"/></svg><i class="caret"></i><svg class="ic"><use href="#tip"/></svg><svg class="ic off"><use href="#play"/></svg><i class="caret"></i><svg class="ic"><use href="#tbox"/></svg><i class="caret"></i></div>

  <div class="toolbar t2"><i class="handle first"></i><svg class="ic"><use href="#dsm"/></svg><svg class="ic"><use href="#gpkg"/></svg><svg class="ic"><use href="#shp"/></svg><svg class="ic"><use href="#feather"/></svg><svg class="ic"><use href="#chip"/></svg><i class="sep"></i><svg class="ic"><use href="#virt"/></svg><i class="sep"></i><i class="handle"></i><span class="drop"><svg class="ic off"><use href="#pens"/></svg></span><svg class="ic"><use href="#pencil"/></svg><svg class="ic off"><use href="#savee"/></svg><svg class="ic off"><use href="#addf"/></svg><svg class="ic off"><use href="#vtx"/></svg><i class="caret"></i><svg class="ic off"><use href="#multi"/></svg><svg class="ic off"><use href="#trash"/></svg><svg class="ic off"><use href="#cut"/></svg><svg class="ic off"><use href="#copy"/></svg><svg class="ic off"><use href="#paste"/></svg><svg class="ic off"><use href="#undo"/></svg><svg class="ic off"><use href="#redo"/></svg><i class="handle"></i><svg class="ic"><use href="#lab"/></svg><svg class="ic"><use href="#diag"/></svg><i class="sep"></i><svg class="ic"><use href="#pin"/></svg><svg class="ic"><use href="#labr"/></svg><i class="sep"></i><svg class="ic off"><use href="#pin"/></svg><svg class="ic off"><use href="#labeye"/></svg><svg class="ic off"><use href="#labmv"/></svg><svg class="ic off"><use href="#labrt"/></svg><svg class="ic off"><use href="#labed"/></svg><i class="handle"></i><svg class="ic"><use href="#db"/></svg><i class="handle"></i><svg class="ic"><use href="#binoc"/></svg><i class="handle"></i><svg class="ic"><use href="#py"/></svg><svg class="ic"><use href="#earth"/></svg><svg class="ic"><use href="#gi"/></svg><svg class="ic"><use href="#swipe"/></svg><span class="marked"><svg class="ic"><use href="#divider"/></svg></span><i class="handle"></i><svg class="ic"><use href="#help"/></svg><i class="handle"></i><svg class="ic"><use href="#topo"/></svg><svg class="ic"><use href="#tabref"/></svg></div>

  <div class="toolbar t3"><i class="handle first"></i><svg class="ic off"><use href="#curve"/></svg><svg class="ic off"><use href="#tri"/></svg><svg class="ic off"><use href="#mv"/></svg><i class="caret"></i><svg class="ic off"><use href="#rt"/></svg><svg class="ic off"><use href="#simp"/></svg><svg class="ic off"><use href="#ring"/></svg><svg class="ic off"><use href="#part"/></svg><svg class="ic off"><use href="#ring"/></svg><svg class="ic off"><use href="#dring"/></svg><svg class="ic off"><use href="#dpart"/></svg><svg class="ic off"><use href="#reshape"/></svg><svg class="ic off"><use href="#offset"/></svg><svg class="ic off"><use href="#vrot"/></svg><svg class="ic off"><use href="#trim"/></svg><svg class="ic off"><use href="#split"/></svg><svg class="ic off"><use href="#split"/></svg><svg class="ic off"><use href="#merge"/></svg><svg class="ic off"><use href="#grid"/></svg><svg class="ic off"><use href="#rsym"/></svg><i class="caret"></i><i class="handle"></i><svg class="ic off"><use href="#hist"/></svg><svg class="ic off"><use href="#histx"/></svg><svg class="ic off"><use href="#hist"/></svg><svg class="ic off"><use href="#histx"/></svg><svg class="ic off"><use href="#sunu"/></svg><svg class="ic off"><use href="#sund"/></svg><svg class="ic off"><use href="#conu"/></svg><svg class="ic off"><use href="#cond"/></svg><svg class="ic off"><use href="#gamu"/></svg><svg class="ic off"><use href="#gamd"/></svg></div>

  <div class="toolbar t4"><i class="handle first"></i><svg class="ic"><use href="#sel"/></svg><i class="caret"></i><svg class="ic"><use href="#eps"/></svg><i class="caret"></i><svg class="ic"><use href="#desel"/></svg><i class="caret"></i><svg class="ic"><use href="#sloc"/></svg><i class="handle"></i><svg class="ic"><use href="#osm"/></svg><svg class="ic"><use href="#qosm"/></svg><i class="handle"></i></div>

  <div class="workspace">
    <aside class="dock left">
      <div class="docktitle"><span>Layer</span><svg><use href="#float"/></svg><svg><use href="#close"/></svg></div>
      <div class="ltools"><span class="on"><svg><use href="#brush"/></svg></span><svg><use href="#addg"/></svg><svg><use href="#eye"/></svg><svg><use href="#filter"/></svg><svg><use href="#epsf"/></svg><i class="caret"></i><svg><use href="#expd"/></svg><svg><use href="#coll"/></svg><svg><use href="#rem"/></svg></div>
      <div class="tree"><div class="trow"><svg class="check"><use href="#chk"/></svg><i class="swatch"></i><b>Mittelsachsen</b></div></div>
      <div class="tabs"><span class="tab idle">Browser</span><span class="tab">Layer</span></div>
    </aside>

    <section class="canvas">
      <svg class="map" viewBox="451 210 1662 1199">
        <path class="core" d="M1057.500 877.500L1150 760L1284 687.500L1400 850L1395 1064L1386 1064.200L1220 990L1062 886Z"/>
        <path class="land" transform="translate(690 330) scale(.42092 .35714)" d="M872 1533L852 1500L860 1480L857 1461L845 1460L826 1447L806 1444L798 1455L780 1457L775 1453L775 1465L770 1476L765 1476L763 1463L757 1468L748 1462L738 1469L728 1463L712 1466L705 1477L683 1457L668 1450L653 1451L648 1438L655 1415L645 1410L630 1404L617 1412L597 1415L590 1409L572 1422L543 1423L517 1450L516 1462L505 1464L496 1476L487 1508L476 1507L470 1520L447 1546L436 1551L426 1549L420 1528L405 1540L397 1533L384 1546L372 1530L382 1515L368 1505L377 1492L357 1496L350 1480L342 1475L328 1452L320 1458L307 1440L308 1390L303 1382L289 1375L276 1391L256 1398L235 1393L222 1381L228 1369L210 1376L202 1390L185 1373L178 1360L158 1356L168 1342L155 1333L152 1315L143 1306L113 1302L108 1295L97 1290L90 1280L89 1262L80 1261L70 1236L52 1234L52 1225L65 1222L58 1190L54 1150L50 1130L49 1080L41 1064L76 1073L91 1066L92 1054L110 1060L140 1060L155 1040L194 1051L203 1030L215 1013L230 978L240 963L266 986L282 987L297 1000L313 993L322 984L311 981L300 960L292 938L294 913L284 907L272 907L255 896L256 878L274 864L275 852L282 850L283 840L296 837L289 803L292 787L302 779L296 769L287 766L268 738L274 732L275 710L290 680L295 670L294 645L318 634L322 622L317 619L333 605L321 598L322 565L335 550L355 560L372 570L392 574L407 563L420 568L433 581L445 566L460 567L471 573L463 590L465 602L482 622L511 622L515 611L524 616L551 615L558 600L568 599L573 607L590 608L618 614L620 628L625 618L655 605L660 598L653 587L657 570L674 553L663 523L653 523L645 499L657 495L668 463L655 459L663 438L647 442L641 425L632 420L622 400L615 397L587 397L572 367L580 360L597 337L602 325L602 307L612 293L620 289L644 263L640 255L644 235L655 218L652 200L673 191L673 181L664 179L668 155L678 147L684 148L693 129L740 140L739 122L750 118L748 106L782 100L797 89L825 81L845 89L890 94L902 108L895 130L918 129L919 152L936 151L947 165L946 185L952 190L980 191L1006 184L1013 170L1013 133L1021 125L1048 136L1062 133L1083 117L1099 135L1103 147L1130 139L1150 142L1152 136L1141 128L1138 102L1168 103L1185 109L1192 106L1211 117L1225 102L1235 108L1237 81L1288 83L1291 72L1316 58L1340 66L1354 82L1355 113L1365 130L1360 148L1334 151L1349 186L1366 191L1369 230L1377 272L1374 278L1371 302L1401 304L1408 328L1424 332L1441 365L1447 356L1460 356L1464 393L1470 395L1470 409L1462 412L1455 432L1455 445L1473 448L1453 459L1449 487L1456 513L1450 515L1452 543L1446 543L1442 558L1426 566L1422 555L1402 560L1399 567L1397 605L1403 606L1409 590L1431 589L1433 570L1450 569L1453 597L1458 599L1460 622L1466 635L1461 643L1467 658L1461 660L1458 710L1468 747L1461 767L1432 763L1429 783L1439 792L1438 807L1456 807L1482 821L1481 828L1463 836L1461 850L1468 868L1452 880L1426 913L1419 910L1424 920L1420 960L1397 978L1412 998"/>
        <path class="land" transform="translate(1270 600) scale(.33333 .42092)" d="M43 205L75 185L110 163L150 127L170 124L210 124L230 115L300 107L320 95L345 76L400 67L410 60L467 59L485 75L500 86L508 97L530 107L540 107L552 114L565 127L575 122L597 133L602 131L617 143L627 160L640 167L595 210L575 245L574 262L588 290L602 309L612 304L650 307L690 300L712 298L706 320L678 340L673 353L655 350L625 354L624 364L634 365L608 385L603 397L592 395L584 408L590 415L578 425L573 440L610 442L648 445L645 452L628 456L630 470L616 480L631 490L623 494L635 503L653 513L648 542L653 548L651 570L658 575L659 590L683 594L705 608L737 622L753 650L757 685L770 700L773 713L806 747L804 760L788 773L760 775L783 792L779 806L808 815L809 831L822 843L821 852L830 852L850 841L865 845L883 842L887 855L905 883L920 890L925 898L950 906L967 904L975 911L970 915L930 916L914 929L937 936L920 960L912 980L902 988L902 1010L935 1023L965 1047L995 1042L1020 1032L1030 1037L1050 1054L1065 1090L1082 1110L1085 1133L1145 1160L1181 1193L1160 1196L1145 1210L1103 1222L1109 1243L1060 1253L1038 1264L1005 1254L960 1252L940 1254L920 1247L905 1247L880 1258L860 1277L830 1278L823 1283L830 1300L862 1330L873 1375L857 1392L862 1410L838 1407L795 1445L782 1463L797 1476L820 1474L813 1490L816 1508L790 1520L738 1527L720 1510L705 1504L695 1490L715 1483L730 1458L708 1451L703 1470L685 1468L665 1453L647 1447L645 1440L627 1439L603 1419L570 1424L550 1412L551 1402L562 1385L552 1380L540 1368L508 1362L529 1350L512 1332L500 1341L487 1345L475 1330L464 1300L440 1276L425 1269L411 1255L391 1240L388 1218L395 1215L393 1185L386 1165L408 1170L411 1163L391 1140L385 1120L378 1104"/>
        <path class="land" transform="translate(1030 820) scale(.33333)" d="M1097 735L1065 735L1040 740L1000 765L972 770L965 789L952 773L932 776L927 765L912 763L908 772L895 768L862 791L840 780L837 770L829 769L829 740L840 729L853 684L825 662L800 636L772 625L760 632L751 647L740 636L744 630L730 617L718 619L707 607L672 612L660 598L650 600L632 599L626 584L600 590L550 584L541 589L539 610L518 601L498 615L493 628L475 635L463 647L453 643L443 618L427 607L425 616L404 605L410 590L407 574L415 570L392 545L380 555L349 558L346 572L335 583L325 581L317 592L300 573L285 565L265 535L255 507L217 476L230 472L232 458L222 457L217 442L193 422L197 407L206 402L222 352L220 322L205 321L178 303L175 290L163 290L148 297L130 290L105 269L85 275L50 271L45 280L38 292L31 287L38 273L39 257L49 243L51 212L67 207L69 186L80 172"/>
      </svg>
    </section>

    <aside class="dock right">
      <div class="docktitle"><span>Layergestaltung</span><svg><use href="#float"/></svg><svg><use href="#close"/></svg></div>
      <div class="combo layerpick"><svg><use href="#polyg"/></svg>Mittelsachsen<i class="tri"></i></div>
      <div class="styling">
        <nav class="rail"><span class="cur"><svg><use href="#brush"/></svg></span><svg><use href="#labtab"/></svg><svg><use href="#abc3"/></svg><svg><use href="#cube"/></svg><svg><use href="#style3"/></svg><svg><use href="#hist2"/></svg></nav>
        <div class="props">
          <div class="combo"><svg class="sg"><use href="#single"/></svg>Einzelsymbol<i class="tri"></i></div>
          <div class="symbol">
            <i class="preview"></i>
            <div class="symtree"><div class="srow head"><i class="tri"></i><i class="sw pale"></i><b>Füllung</b></div><div class="srow kid"><i class="sw"></i>Einfache Füllung</div></div>
            <div class="btngrid">
              <span class="btn"><svg viewBox="0 0 16 16"><path d="M6 1.500h4V6h4.500v4H10v4.500H6V10H1.500V6H6z" fill="#fff" stroke="#3e9a52" stroke-width="1.200"/><path d="M8 3.500v9M3.500 8h9" stroke="#3e9a52" stroke-width="1.600"/></svg></span>
              <span class="btn dim"><svg viewBox="0 0 16 16"><path d="M1.500 13L8 2.500 14.500 13z" fill="#bcc3c8" stroke="#999"/></svg></span>
              <span class="btn dim"><svg viewBox="0 0 16 16"><path d="M1.500 5.500h13v5h-13zM4 8h8" fill="none" stroke="#c99" stroke-width="1.300"/></svg></span>
              <span class="btn dim"><svg viewBox="0 0 16 16"><path d="M1.500 3L8 13.500 14.500 3z" fill="#bcc3c8" stroke="#999"/></svg></span>
              <span class="btn dim"><svg viewBox="0 0 16 16"><path d="M4 2h10v12H4zM1.500 5v10H9" fill="none" stroke="#888" stroke-width="1.200"/><rect x="10" y="10" width="5" height="5" fill="#bba"/></svg></span>
              <span class="btn dim"><svg viewBox="0 0 16 16"><rect x="2.500" y="8" width="11" height="7" fill="#aaa48c" stroke="#887"/><path d="M5 4q3-5 6.500-1v5" fill="none" stroke="#999" stroke-width="2"/></svg></span>
            </div>
          </div>
          <hr>
          <div class="form">
            <div class="frow r1"><label>Einheit</label><div class="combo">Millimeter<i class="tri"></i></div></div>
            <div class="frow r2"><label>Deckkraft</label><div class="slider"><i></i></div><div class="spin">100,0 %<em><i class="up"></i><i class="dn"></i></em></div></div>
            <div class="frow r3"><label>Farbe</label><div class="colorbtn"><i></i></div><div class="btn arrow"><i class="tri"></i></div></div>
          </div>
          <hr class="h2">
          <div class="favs"><div class="favbox"><svg><use href="#mag"/></svg><span>Favoriten</span><svg class="clr" viewBox="0 0 14 10"><path d="M0 5L4 0h9q1 0 1 1v8q0 1-1 1H4z" fill="#a3a3a3"/><path d="M6 2.500l4 5M10 2.500l-4 5" stroke="#fff" stroke-width="1.300"/></svg><em><i class="tri"></i></em></div><svg class="sty"><use href="#style"/></svg></div>
          <div class="gallery">
            <figure><svg viewBox="0 0 63 53"><rect x=".5" y=".5" width="62" height="52" fill="url(#gPlasma)" stroke="#333"/></svg><figcaption>gradient&nbsp;&nbsp; plasma</figcaption></figure>
            <figure><svg viewBox="0 0 63 53"><rect x=".5" y=".5" width="62" height="52" fill="#a0a0a0" stroke="#b8b8b8"/></svg><figcaption>gray 3 fill</figcaption></figure>
            <figure><svg viewBox="0 0 63 53"><rect x=".5" y=".5" width="62" height="52" fill="url(#pSlash)" stroke="#222"/></svg><figcaption>hashed black /</figcaption></figure>
            <figure><svg viewBox="0 0 63 53"><rect x=".5" y=".5" width="62" height="52" fill="url(#pBack)" stroke="#222"/></svg><figcaption>hashed black \</figcaption></figure>
            <figure><svg viewBox="0 0 63 53"><rect x=".5" y=".5" width="62" height="52" fill="url(#pBack)"/><rect x=".5" y=".5" width="62" height="52" fill="url(#pSlash)" stroke="#222"/></svg><figcaption>hashed black X</figcaption></figure>
            <figure><svg viewBox="0 0 63 53"><rect x="1" y="1" width="61" height="51" fill="#fff" stroke="#3f87c1" stroke-width="2.400"/></svg><figcaption>outline blue</figcaption></figure>
            <figure><svg viewBox="0 0 63 53"><rect x="1" y="1" width="61" height="51" fill="#fff" stroke="#5cbd5a" stroke-width="2.400"/></svg><figcaption>outline green</figcaption></figure>
            <figure><svg viewBox="0 0 63 53"><rect x="1" y="1" width="61" height="51" fill="#fff" stroke="#e6212b" stroke-width="2.400"/></svg><figcaption>outline red</figcaption></figure>
            <figure><svg viewBox="0 0 63 53"><rect x="1" y="1" width="61" height="51" fill="#f6f6f6" stroke="#bdbdbd" stroke-width="1.800"/><g fill="#52b352" stroke="#2e7d2e" stroke-width=".5"><circle cx="1" cy="1" r="3"/><circle cx="26.500" cy="1" r="3"/><circle cx="52" cy="1" r="3"/><circle cx="62" cy="16" r="3"/><circle cx="62" cy="42" r="3"/><circle cx="1" cy="22.500" r="3"/><circle cx="1" cy="48" r="3"/><circle cx="22" cy="52.500" r="3"/><circle cx="47.500" cy="52.500" r="3"/></g><g fill="#e0161c" stroke="#8c1014" stroke-width=".5"><circle cx="14" cy="1" r="3"/><circle cx="39" cy="1" r="3"/><circle cx="62" cy="3.500" r="3"/><circle cx="62" cy="29" r="3"/><circle cx="60" cy="52.500" r="3"/><circle cx="34.500" cy="52.500" r="3"/><circle cx="9" cy="52.500" r="3"/><circle cx="1" cy="35" r="3"/><circle cx="1" cy="10" r="3"/></g></svg><figcaption>outline xpattern</figcaption></figure>
            <figure><svg viewBox="0 0 63 53"><rect x=".5" y=".5" width="62" height="52" fill="url(#pDot)" stroke="#444"/></svg><figcaption>pattern dot black</figcaption></figure>
            <figure><svg viewBox="0 0 63 53"><rect width="63" height="53" fill="#ff6f0f"/><rect width="63" height="53" fill="url(#pZelda)"/></svg><figcaption>pattern zelda</figcaption></figure>
            <figure><svg viewBox="0 0 63 53"><rect x=".5" y=".5" width="62" height="52" fill="#4088c2" stroke="#3a7db3"/></svg><figcaption>simple blue fill</figcaption></figure>
            <figure><svg viewBox="0 0 63 53"><rect x=".5" y=".5" width="62" height="52" fill="#5ab956" stroke="#52aa4e"/></svg><figcaption>simple green fill</figcaption></figure>
            <figure><svg viewBox="0 0 63 53"><rect x=".5" y=".5" width="62" height="52" fill="#e71d1f" stroke="#cd1a1c"/></svg><figcaption>simple red fill</figcaption></figure>
          </div>
          <div class="galbar"><span class="btn on"><svg><use href="#gridv"/></svg></span><svg class="lst"><use href="#table"/></svg><span class="btn savesym">Symbol speichern...</span><span class="btn adv">Erweitert<i class="tri"></i></span></div>
          <div class="render"><i class="rt"></i><b>Layerdarstellung</b></div>
          <div class="applybar"><span class="btn sq"><svg><use href="#undoc"/></svg></span><span class="btn sq"><svg><use href="#redoc"/></svg></span><svg class="check"><use href="#chk"/></svg><span class="live">Laufende Aktualisierung</span><span class="btn apply">Apply</span></div>
        </div>
      </div>
      <div class="tabs"><span class="tab">Layergestaltung</span><span class="tab idle">Verarbeitungswerkzeuge</span></div>
    </aside>
  </div>

  <footer class="status">
    <div class="locator"><svg><use href="#mag"/></svg>Zu suchender Typ (⌘K)</div>
    <span class="sl w1">Koordinate</span><span class="box coord">395775,5673828</span>
    <svg class="mouse" viewBox="0 0 16 16"><path d="M2 3l6-1 6 9-3 4-4-1z" fill="#aaa" stroke="#333"/><path d="M2 7l8-5M4 11l9-7M6 14l8-7" stroke="#333"/></svg>
    <span class="sl w2">Maßstab</span><span class="box scale">1:213739<em><i class="tri"></i></em></span>
    <svg class="lock" viewBox="0 0 13 16"><path d="M3.500 8V4.500a3 3 0 0 1 6 0V8" fill="none" stroke="#999" stroke-width="1.800"/><rect x="1" y="7.500" width="11" height="8" rx="1" fill="#4a4a4a"/></svg>
    <span class="sl w3">Vergrößerung</span><span class="box mag">100%<em><i class="up"></i><i class="dn"></i></em></span>
    <span class="sl w4">Drehung</span><span class="box rot">0,0 °<em><i class="up"></i><i class="dn"></i></em></span>
    <svg class="check"><use href="#chk"/></svg><span class="sl w5">Zeichnen</span>
    <svg class="globe" viewBox="0 0 16 16"><path d="M2 5L8 1l6 4v6l-6 4-6-4z" fill="#a9a9a9" stroke="#777"/><path d="M8 1v14M2 8h12M4 3.500q-2 5 1 10M12 3.500q2 5-1 10M2.500 5h11M2.500 11h11" stroke="#666" fill="none" stroke-width=".8"/></svg>
    <span class="sl w6">EPSG:25833</span>
    <svg class="msg" viewBox="0 0 16 16"><path d="M8 .5a7 6.800 0 1 1-.5 13.600Q6 15.500 3 15.500q1.500-1.500 1-2.500A7 6.800 0 0 1 8 .5z" fill="#6a6a6a"/><path d="M4 7h2M7.200 7h2M10.400 7h2" stroke="#fff" stroke-width="1.800"/></svg>
  </footer>
</main>

<svg class="pointer" viewBox="0 0 12 18"><path d="M1 1v13l3-2.800 2 5 2.200-1-2-4.800h4z" fill="#000" stroke="#fff" stroke-width="1"/></svg>

<section class="dialog">
  <div class="dhead"><i class="red"></i><i class="gry"></i><i class="grn"></i><h2>Polygon Divider</h2></div>
  <div class="dbody">
    <div class="grp"><label>Input Layer</label><div class="combo">Mittelsachsen<i class="tri"></i></div></div>
    <div class="grp"><label>Output File</label><div class="line"><div class="field file"></div><span class="btn more">...</span></div></div>
    <div class="grp"><label class="tight">Target Area (in CRS Units)</label><div class="line"><i class="radio sel"></i><div class="field num">10000</div></div></div>
    <div class="grp"><label>Number of Divisions</label><div class="line"><i class="radio"></i><div class="field num second">20</div></div></div>
    <div class="grp"><label>Cut Direction</label><div class="combo">left to right<i class="tri"></i></div></div>
    <div class="grp"><label>Tolerance</label><div class="field">0.1</div></div>
    <div class="line opt"><svg class="check"><use href="#chk"/></svg><span>Absorb Offcuts</span></div>
    <div class="actions"><span class="btn">Cancel</span><span class="btn ok">OK</span></div>
  </div>
</section>
</body>
</html>
```
FILE: styles.css
```css
*, *::before, *::after { box-sizing: border-box; }
html, body { margin: 0; height: 100%; }
body {
  width: 2560px; height: 1440px; overflow: hidden;
  display: flex; flex-direction: column;
  background: #c99570;
  font: 13px/16px Inter, "Liberation Sans", sans-serif;
  color: #1c1c1c;
}
svg { display: block; flex: none; }
.sprite { position: absolute; visibility: hidden; }
.sprite pattern * { visibility: visible; }
h1, h2, figure { margin: 0; font-size: 13px; }

/* macOS menu bar */
.menubar {
  height: 24px; flex: none; display: flex; align-items: center;
  padding: 0 18px 1px 21px; color: #2a211b; font-size: 13px;
  background: linear-gradient(90deg, #ffd8c6, #ffdfc5 45%, #ffe3c6 80%, #ffdbca);
}
.menubar span { margin-left: 21px; letter-spacing: -.1px; }
.menubar span:nth-of-type(n+8) { margin-left: 20.400px; }
.apple { width: 14px; height: 17px; margin-top: -2px; }
.m0 { margin-left: 22px; letter-spacing: -.2px; }
.dot { width: 4px; height: 4px; border-radius: 50%; background: #2a211b; margin-left: auto; margin-right: 21px; }
.ctrl { width: 14px; height: 13px; margin-right: 16px; }
.date { width: 74px; white-space: nowrap; }
.clock { width: 35px; white-space: nowrap; }

.window {
  flex: 1; display: flex; flex-direction: column; min-height: 0;
  margin-top: 0; border-top: 1px solid #b48a70;
  border-radius: 10px; overflow: hidden; background: #eee;
}
.titlebar { height: 29px; flex: none; background: #f0eceb; border-bottom: 1px solid #d3d0cf; display: grid; grid-template-columns: 1fr auto 1fr; align-items: center; }
.titlebar h1 { color: #b1adac; font-weight: 700; letter-spacing: .05px; margin-top: -2px; }
.lights { display: flex; gap: 8px; padding-left: 8px; }
.lights i { width: 12px; height: 12px; border-radius: 50%; background: #d2cfce; border: 1px solid #bbb7b6; }

/* toolbars */
.toolbar { flex: none; display: flex; align-items: center; background: linear-gradient(#f6f6f6, #ececec); border-bottom: 1px solid #b9b9b9; }
.t1, .t4 { height: 38px; }
.t2, .t3 { height: 39px; }
.ic { width: 24px; height: 24px; margin: 0 4.5px; overflow: visible; }
.t1 .ic { margin-top: -1px; }
.off { opacity: .33; filter: saturate(.35); }
.handle { flex: none; width: 16px; height: 22px; background: radial-gradient(circle, #b5b5b5 .7px, transparent 1px) 7px 0 / 3px 4px repeat; background-clip: content-box; padding-left: 7px; padding-right: 4px; }
.handle.first { width: 12.5px; padding-left: 4px; padding-right: 3.500px; background-position: 4px 0; }
.caret { flex: none; width: 12px; height: 6px; background: #555; clip-path: polygon(2.500px 0, 9.500px 0, 6px 4.500px); }
.sep { flex: none; width: 7px; height: 24px; background: linear-gradient(#c2c2c2, #c2c2c2) 3px 0 / 1px 100% no-repeat; }
.pressed { width: 33px; height: 30px; display: flex; align-items: center; background: #dadada; border: 1px solid #a9a9a9; border-radius: 2px; }
.pressed .ic { margin: 0 3.500px; }
.drop { position: relative; }
.drop::after { content: ""; position: absolute; right: 2px; bottom: -2px; border: 3px solid transparent; border-top: 4px solid #555; border-bottom: 0; }
.marked { position: relative; }
.marked::after { content: ""; position: absolute; left: -12px; top: -10px; width: 57px; height: 45px; border: 5px solid #e42500; border-radius: 50%; z-index: 2; }

/* docks */
.workspace { flex: 1; min-height: 0; display: flex; }
.dock { display: flex; flex-direction: column; }
.docktitle { flex: none; height: 22px; display: flex; align-items: center; gap: 2px; font-size: 12px; letter-spacing: -.1px; color: #333; }
.docktitle span { flex: 1; }
.docktitle svg { width: 12px; height: 12px; }
.left { width: 444px; flex: none; }
.left .docktitle { padding: 0 1px 0 4px; font-size: 11.500px; }
.ltools { flex: none; height: 29px; display: flex; align-items: center; padding: 0 0 3px 4px; }
.ltools svg { width: 17px; height: 17px; margin: 0 4px; overflow: visible; }
.ltools .on { width: 24px; height: 23px; display: flex; align-items: center; background: #dadada; border: 1px solid #aaa; border-radius: 2px; }
.ltools .on svg { margin: 0 2.500px; }
.ltools .caret { margin-right: 1px; }
.tree { flex: 1; background: #fff; border: 1px solid #b9b9b9; margin-bottom: 1px; }
.trow { height: 18px; display: flex; align-items: center; background: #dfdfdf; padding-left: 23px; }
.trow b { text-decoration: underline; color: #000; margin-left: 6px; letter-spacing: 0; }
.check { width: 14px; height: 14px; background: #fff; border: 1px solid #b2b2b2; }
.swatch { width: 16px; height: 16px; background: #b19a92; border: 1px solid #a08d86; margin-left: 6px; }
.tabs { flex: none; height: 27px; border-top: 1px solid #b9b9b9; display: flex; align-items: flex-start; }
.tab { height: 25px; line-height: 25px; padding: 0 11px; background: #f5f5f5; border: 1px solid #b9b9b9; border-top: 0; border-radius: 0 0 3px 3px; }
.left .tab { padding: 0 10.500px; }
.tab.idle { height: 23px; line-height: 23px; background: #dedede; }

.canvas { flex: none; width: 1664px; margin: 1px 0 0 7px; background: #fff; border: 1px solid #b9b9b9; }
.map { width: 1662px; height: 100%; }
.core { fill: #ae7b62; }
.land { fill: #ae7b62; stroke: #5c4f4a; stroke-width: 1; vector-effect: non-scaling-stroke; stroke-linejoin: round; }

/* generic controls */
.tri { flex: none; width: 8px; height: 5px; background: #555; clip-path: polygon(0 0, 100% 0, 50% 100%); }
.combo, .btn { border: 1px solid #b0b0b0; border-radius: 3px; background: linear-gradient(#fff, #f0f0f0); display: flex; align-items: center; color: #111; }
.combo { padding: 0 7px 0 4px; }
.combo > .tri { margin-left: auto; }
.btn { justify-content: center; flex: none; }
.up, .dn { width: 6px; height: 4px; background: #555; }
.up { clip-path: polygon(0 100%, 100% 100%, 50% 0); }
.dn { clip-path: polygon(0 0, 100% 0, 50% 100%); }

.right { flex: 1; min-width: 0; padding-left: 8px; }
.right .docktitle { height: 23px; padding: 0 2px 0 1px; }
.layerpick { height: 24px; margin-right: 3px; }
.layerpick svg { width: 18px; height: 18px; margin-right: 2px; }
.styling { flex: 1; display: flex; gap: 3px; margin-top: 6px; min-height: 0; }
.rail { flex: none; width: 38px; margin-bottom: 4px; background: #676767; display: flex; flex-direction: column; align-items: center; }
.rail svg { width: 22px; height: 22px; margin: 5px 8px 5px 0; overflow: visible; }
.rail .cur { width: 100%; height: 32px; background: #eee; display: flex; justify-content: center; }
.rail .cur svg { margin: 5px 2px; opacity: .85; }
.props { flex: 1; min-width: 0; display: flex; flex-direction: column; padding-right: 3px; }
.props > .combo { height: 24px; flex: none; }
.sg { width: 14px; height: 16px; margin: 0 5px 0 1px; }
.symbol { height: 143px; flex: none; display: flex; align-items: flex-start; }
.preview { flex: none; width: 61px; height: 61px; margin: 41px 25px 0 20px; background: #ae7b62; border: 1px solid #4a4a4a; }
.symtree { flex: none; width: 219px; height: 112px; margin: 15px 6px 0 0; background: #fff; border: 1px solid #b9b9b9; }
.srow { height: 18px; display: flex; align-items: center; }
.head { background: #dfdfdf; padding-left: 6px; }
.kid { padding-left: 43px; }
.sw { width: 16px; height: 16px; background: #ae7b62; border: 1px solid #97705e; margin-right: 6px; }
.pale { background: #b19a92; border-color: #a08d86; margin: 0 7px 0 9px; }
.btngrid { display: grid; grid-template-columns: 28px 28px; grid-auto-rows: 24px; gap: 4px 6px; margin-top: 6px; }
.btn svg { width: 16px; height: 16px; }
.dim { border-color: #cfcfcf; }
.dim svg { opacity: .4; }
hr { width: 100%; height: 2px; flex: none; margin: 0; border: 0; background: linear-gradient(#bfbfbf 50%, #fff 50%); }
.form { flex: none; padding-right: 9px; }
.frow { display: flex; align-items: center; }
.frow label { width: 60px; flex: none; white-space: nowrap; }
.frow .combo { flex: 1; height: 24px; }
.r1 { margin-top: 6px; }
.r2 { height: 23px; }
.slider { width: 220px; height: 6px; margin-left: 1px; background: #62a4ec; border: 1px solid #3c7cc6; border-radius: 2px; position: relative; }
.slider i { position: absolute; right: 0; top: -5px; width: 13px; height: 13px; background: #fff; border: 1px solid #a5a5a5; border-radius: 3px; }
.spin { width: 100px; height: 22px; margin-left: auto; }
.spin, .box { display: flex; align-items: center; background: #fff; border: 1px solid #b0b0b0; border-radius: 3px; padding-left: 4px; white-space: nowrap; }
.spin em, .box em { width: 15px; height: 100%; margin-left: auto; border-left: 1px solid #b0b0b0; display: flex; flex-direction: column; align-items: center; justify-content: center; gap: 4px; }
.r3 { gap: 1px; margin-top: 1px; }
.colorbtn { flex: none; width: 311px; height: 28px; padding: 5px 4px; border: 1px solid #b0b0b0; border-radius: 3px; background: linear-gradient(#fff, #f0f0f0); }
.colorbtn i { display: block; height: 16px; border-radius: 3px; background: #ae7b62; }
.arrow { width: 11px; height: 28px; }
.h2 { margin-top: 67px; width: 384px; }
.favs { flex: none; height: 24px; margin-top: 5px; display: flex; align-items: center; }
.favbox { width: 354px; height: 24px; background: #fff; border: 1px solid #b0b0b0; border-radius: 3px; display: flex; align-items: center; padding-left: 8px; }
.favbox > svg:first-child { width: 15px; height: 15px; margin-right: 6px; }
.clr { width: 14px; height: 10px; margin-left: auto; margin-right: 9px; }
.favbox em { width: 20px; height: 100%; border-left: 1px solid #b0b0b0; display: flex; align-items: center; justify-content: center; background: linear-gradient(#fff, #f0f0f0); }
.sty { width: 16px; height: 16px; margin: -4px 0 0 9px; }
.gallery { flex: none; width: 384px; height: 666px; margin-top: 4px; background: #fff; border: 1px solid #b9b9b9; display: grid; grid-template-columns: 101px 101px 101px; grid-auto-rows: 100px; align-content: start; padding: 21px 0 0 3px; }
.gallery figure { display: flex; flex-direction: column; align-items: center; }
.gallery svg { width: 63px; height: 53px; overflow: visible; }
.gallery figcaption { margin-top: 13px; font-size: 9px; line-height: 16px; letter-spacing: .2px; color: #111; white-space: nowrap; }
.galbar { flex: none; height: 24px; margin-top: 6px; display: flex; align-items: center; padding-right: 9px; }
.galbar .on { width: 24px; height: 24px; background: #dadada; }
.galbar .lst { width: 14px; height: 14px; margin-left: 5px; }
.savesym { width: 128px; height: 24px; margin-left: auto; letter-spacing: -.05px; }
.adv { width: 80px; height: 24px; margin-left: 7px; gap: 9px; }
.adv .tri { width: 5px; height: 4px; }
.render { flex: none; height: 16px; margin-top: 22px; display: flex; align-items: center; padding-left: 5px; }
.rt { width: 7px; height: 11px; background: #333; clip-path: polygon(0 0, 100% 50%, 0 100%); margin-right: 10px; }
.applybar { height: 24px; flex: none; margin-top: 7px; display: flex; align-items: center; padding-right: 1px; }
.sq { width: 24px; height: 24px; margin-right: 6px; }
.applybar .check { margin-left: auto; margin-right: 5px; }
.live { width: 146px; white-space: nowrap; letter-spacing: -.05px; }
.apply { width: 80px; height: 25px; margin-left: 12px; }
.right .tabs { margin-left: -3px; }

/* status bar */
.status { flex: none; height: 30px; display: flex; align-items: center; padding: 0 8px 0 4px; font-size: 11px; }
.locator { width: 255px; height: 24px; margin-right: 1380px; display: flex; align-items: center; background: #fff; border: 1px solid #b0b0b0; border-radius: 3px; color: #888; font-size: 13px; padding-left: 7px; letter-spacing: -.05px; }
.locator svg { width: 14px; height: 14px; margin-right: 7px; }
.sl { flex: none; white-space: nowrap; }
.w1 { width: 60px; }
.box { height: 22px; flex: none; }
.coord { width: 109px; justify-content: center; padding: 0; }
.mouse { width: 16px; height: 16px; margin: 0 14px 0 4px; }
.w2 { width: 49px; }
.scale { width: 94px; }
.scale em { width: 21px; }
.lock { width: 13px; height: 16px; margin: 0 10px; }
.w3 { width: 76px; letter-spacing: -.05px; }
.mag { width: 91px; margin-right: 9px; }
.w4 { width: 54px; }
.rot { width: 94px; margin-right: 5px; }
.w5 { width: 63px; margin-left: 5px; }
.globe { width: 16px; height: 16px; margin-right: 3px; }
.msg { width: 16px; height: 16px; margin-left: auto; }

/* plugin dialog */
.pointer { position: absolute; left: 1541px; top: 397px; width: 13px; height: 19px; }
.dialog {
  position: absolute; left: 1572px; top: 283px; width: 377px; height: 463px;
  background: #eee; border-radius: 10px; overflow: hidden;
  box-shadow: 0 0 0 1px rgba(0,0,0,.2), 0 18px 40px rgba(0,0,0,.42), 0 0 20px rgba(0,0,0,.12);
  display: flex; flex-direction: column;
}
.dhead { flex: none; height: 29px; background: #faf5f4; border-bottom: 1px solid #ccc8c7; display: flex; align-items: center; gap: 8px; padding-left: 8px; }
.dhead i { width: 12px; height: 12px; border-radius: 50%; }
.red { background: #ff5b54; border: 1px solid #e0443e; }
.gry { background: #dcd8d7; border: 1px solid #c8c4c3; }
.grn { background: #27c73f; border: 1px solid #1aab29; }
.dhead h2 { margin: -1px 0 0 69px; color: #4b4746; letter-spacing: .1px; }
.dbody { padding: 16px 0 0 20px; letter-spacing: .05px; }
.grp { height: 60px; width: 341px; }
.grp label { display: block; line-height: 23px; }
.grp .tight { letter-spacing: -.1px; }
.dbody .combo { height: 27px; padding-right: 7px; }
.field { height: 27px; background: #fff; border: 1px solid #b0b0b0; border-radius: 3px; padding: 1px 3px 0; line-height: 24px; color: #222; }
.line { display: flex; }
.file { width: 291px; }
.more { flex: 1; height: 27px; }
.radio { width: 14px; height: 14px; margin-top: 4px; border: 1px solid #aaa; border-radius: 50%; background: #fff; flex: none; }
.radio.sel { background: radial-gradient(circle, #333 3px, #fff 3.600px); }
.num { flex: none; width: 321px; margin-left: 8px; }
.second { margin-left: 7px; color: #c4c4c4; }
.opt { align-items: center; gap: 5px; height: 16px; margin-top: 4px; color: #333; }
.actions { display: flex; gap: 6px; margin: 5px 6px 0 0; justify-content: flex-end; }
.actions .btn { width: 80px; height: 24px; color: #333; }
.actions .ok { border-color: #5e9be0; background: linear-gradient(#fff, #e6edf4); }
```
